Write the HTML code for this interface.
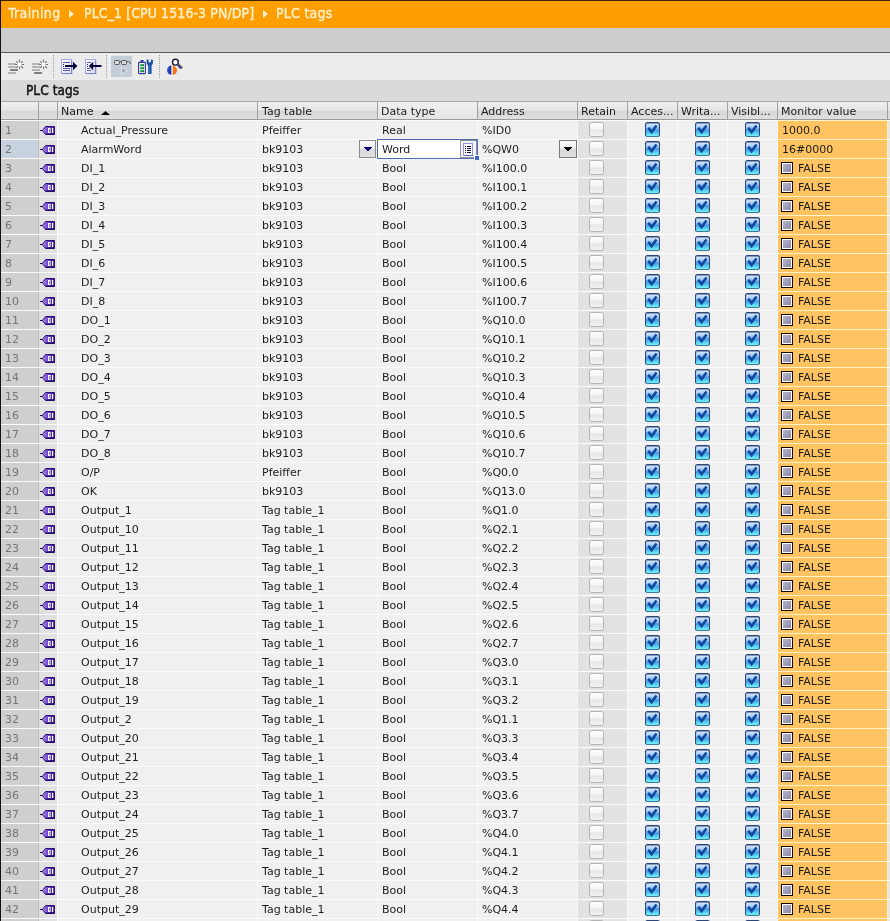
<!DOCTYPE html><html><head><meta charset="utf-8"><title>PLC tags</title><style>
*{box-sizing:border-box;margin:0;padding:0}
html,body{width:890px;height:921px;overflow:hidden;background:#f0f0f0}
#wrap{position:absolute;left:0;top:0;width:890px;height:921px;will-change:transform}
body{font-family:"DejaVu Sans","Liberation Sans",sans-serif;font-size:11px;color:#1c1c1c;position:relative}
.abs{position:absolute}
svg{position:absolute;display:block}
#title{left:0;top:0;width:890px;height:28px;background:#ff9e00;border-top:1px solid #3c2000;color:#fff1cf;font-family:"DejaVu Sans Condensed","DejaVu Sans","Liberation Sans",sans-serif;font-size:14px;line-height:24px;white-space:pre;-webkit-text-stroke:0.35px #fff1cf}
#title span{position:absolute;top:0}
#title i{position:absolute;top:9px;width:0;height:0;border-left:5px solid #fff1cf;border-top:4px solid transparent;border-bottom:4px solid transparent}
#gray{left:0;top:28px;width:890px;height:24px;background:#cdcdcd}
#dline{left:0;top:52px;width:890px;height:1px;background:#5e5e5e}
#tool{left:0;top:53px;width:890px;height:27px;background:#ececec}
#band{left:0;top:80px;width:890px;height:21px;background:#dadada;font-family:"DejaVu Sans Condensed","DejaVu Sans",sans-serif;font-size:13.5px;line-height:21px;padding-left:26px;color:#141414;-webkit-text-stroke:.45px #141414;letter-spacing:.05px}
#lborder{left:0;top:0;width:1px;height:921px;background:#121218}
#hdr{left:0;top:101px;width:890px;height:19px;border-top:1px solid #a8a8a8;border-bottom:1px solid #9a9a9a;background:linear-gradient(#eeeeee 0,#e6e6e6 48%,#d6d6d6 54%,#e0e0e0 100%)}
#hdr div{position:absolute;top:1px;height:17px;line-height:17px;white-space:nowrap}
#hdr i{position:absolute;top:0;width:1px;height:17px;background:#a0a0a0}
.r{position:absolute;left:0;width:890px;height:19px;border-top:1px solid #fbfbfb;background:#f0f0f0}
.r div{position:absolute;top:1px;height:17px;line-height:17px;white-space:nowrap}
.r .n{top:0;height:18px;left:0;width:38px;background:#cfcfcf;color:#747474;padding-left:5px;line-height:19px}
.r .ic{top:0;height:18px;left:39px;width:18px;background:#e1e1e1}
.nm{left:81px}
.tt{left:262px}
.dt{left:382px}
.ad{left:482px}
.r .rt{top:0;height:18px;left:578px;width:49px;background:#e2e2e2}
.r .mv{top:-1px;height:19px;line-height:19px;left:778px;width:110px;background:#ffc362;padding-left:4px;border-top:1px solid #fff4c8;border-right:1px solid #fff4c8}
.r .mv2{top:0;height:18px;left:888px;width:2px;background:#e6e6e6}
.r .fl{padding-left:20px}
.fi{position:absolute;left:3px;top:3px;width:12px;height:12px;border:1px solid #140800;background:#fff;padding:1px}
.fi:after{content:"";display:block;width:8px;height:8px;background:linear-gradient(135deg,#b4b4d0,#8a8aa8)}
.cb{position:absolute;top:1px;width:15px;height:15px;border-radius:2.5px}
.cb.off{left:11px;border:1px solid #b4b4b4;background:linear-gradient(#fdfdfd,#f4f4f4 45%,#e6e6e6 55%,#f2f2f2)}
.cb.on{box-shadow:inset 0 1px 0 rgba(44,70,118,.5);border:1px solid #2c4676;border-bottom-color:#3a7894;background:linear-gradient(#e4f0ff 0,#9cc4f4 35%,#4a96e4 55%,#58d0f0 80%,#78f0f8 100%)}
.vs{position:absolute;top:0;width:1px;height:18px;background:#fafafa}
.btn{position:absolute;height:18px;border:1px solid #8c8c8c;background:linear-gradient(#fcfcfc 0,#ececec 48%,#d8d8d8 52%,#e2e2e2 100%)}
</style></head><body><div id="wrap">
<div id="title" class="abs"><span style="left:8px;letter-spacing:.38px">Training</span><i style="left:69px"></i><span style="left:84px;letter-spacing:.08px">PLC_1 [CPU 1516-3 PN/DP]</span><i style="left:263px"></i><span style="left:276px;letter-spacing:.25px">PLC tags</span></div>
<div id="gray" class="abs"></div><div id="dline" class="abs"></div><div id="tool" class="abs"><svg width="200" height="27" viewBox="0 53 200 27" style="left:0;top:0"><defs><linearGradient id="dg" x1="0" y1="0" x2="1" y2="1"><stop offset="0" stop-color="#ffffff"/><stop offset="1" stop-color="#d8d8f4"/></linearGradient><linearGradient id="bl" x1="0" y1="0" x2="1" y2="0"><stop offset="0" stop-color="#3a5ce0"/><stop offset="1" stop-color="#0c2488"/></linearGradient><linearGradient id="og" x1="0" y1="0" x2="1" y2="1"><stop offset="0" stop-color="#ff8a28"/><stop offset="1" stop-color="#f05c08"/></linearGradient><linearGradient id="gr" x1="0" y1="0" x2="1" y2="0"><stop offset="0" stop-color="#38b050"/><stop offset="1" stop-color="#0c7828"/></linearGradient></defs><g shape-rendering="crispEdges"><!-- icon1 --><rect x="8" y="63" width="8" height="2" fill="#b4b4b4"/><rect x="8" y="66" width="8" height="2" fill="#b4b4b4"/><rect x="10" y="69" width="8" height="2" fill="#808080"/><rect x="8" y="72" width="8" height="2" fill="#b4b4b4"/><!-- icon2 --><rect x="32" y="63" width="8" height="2" fill="#b4b4b4"/><rect x="32" y="66" width="8" height="2" fill="#b4b4b4"/><rect x="32" y="69" width="8" height="2" fill="#b4b4b4"/><rect x="34" y="72" width="8" height="2" fill="#808080"/><!-- separators --><path d="M53.5 55V78M106.5 55V78M159.5 55V78" stroke="#9c9c9c" stroke-width="1" stroke-dasharray="1 1"/><!-- pressed bg --><rect x="111" y="56" width="21" height="21" fill="#c3ced8"/></g><!-- starbursts --><g><circle cx="19.5" cy="64.5" r="3" fill="#fff"/><path d="M19.5 59.5V62.5M19.5 66.5V69M15 64.5H17.5M21.5 64.5H24M16.3 61.3L18 63M21 66L23 68M22.8 61.3L21 63M18 66L16.2 67.8" stroke="#707070" stroke-width="1.1" fill="none"/></g><g transform="translate(24 0)"><circle cx="19.5" cy="64.5" r="3" fill="#fff"/><path d="M19.5 59.5V62.5M19.5 66.5V69M15 64.5H17.5M21.5 64.5H24M16.3 61.3L18 63M21 66L23 68M22.8 61.3L21 63M18 66L16.2 67.8" stroke="#707070" stroke-width="1.1" fill="none"/></g><!-- icon3 doc + arrow right --><rect x="62.5" y="60.5" width="10.5" height="14" fill="#9c9cc8" opacity=".35"/><rect x="61.5" y="59.5" width="10" height="14" fill="url(#dg)" stroke="#a8a8e8"/><path d="M62 73.5H72M71.5 61V74" stroke="#8484c8" fill="none"/><path d="M63 62.5H70M63 68.5H70M63 70.5H70" stroke="#606098" stroke-width="1"/><rect x="63" y="64" width="1" height="1" fill="#181850"/><rect x="63" y="66" width="1" height="1" fill="#181850"/><path d="M65 66H73.5" stroke="#06063a" stroke-width="2"/><path d="M73 61.8L77.4 66L73 70.2Z" fill="#06063a"/><!-- icon4 doc + arrow left --><rect x="86.5" y="60.5" width="10.5" height="14" fill="#9c9cc8" opacity=".35"/><rect x="85.5" y="59.5" width="10" height="14" fill="url(#dg)" stroke="#a8a8e8"/><path d="M86 73.5H96M95.5 61V74" stroke="#8484c8" fill="none"/><path d="M87 62.5H91M87 68.5H90M87 70.5H91" stroke="#606098" stroke-width="1"/><rect x="87" y="64" width="1" height="1" fill="#181850"/><rect x="87" y="66" width="1" height="1" fill="#181850"/><path d="M92.5 66H101.5" stroke="#06063a" stroke-width="2"/><path d="M93.2 61.8L88.8 66L93.2 70.2Z" fill="#06063a"/><!-- glasses --><rect x="114.5" y="60.5" width="5" height="4" rx="1" fill="#d4dadf" stroke="#5a5a5a"/><rect x="121.5" y="60.5" width="5" height="4" rx="1" fill="#d4dadf" stroke="#5a5a5a"/><path d="M119.5 61.5H121.5M126.5 61.5H128.5Q130.5 61.5 130.5 64" stroke="#5a5a5a" fill="none"/><path d="M121.5 67.2L128 70.5L121.5 73.8Z" fill="#a4b0bc" stroke="#dfe6ee" stroke-width="1"/><!-- battery --><rect x="140.5" y="60" width="3" height="2" fill="#3a3aa0"/><rect x="138.6" y="62.4" width="6.8" height="11.2" rx=".8" fill="#f4faf4" stroke="#3a3aa0" stroke-width="1.2"/><rect x="140" y="64.2" width="4" height="2" fill="url(#gr)"/><rect x="140" y="67.2" width="4" height="2" fill="url(#gr)"/><rect x="140" y="70.2" width="4" height="2" fill="url(#gr)"/><!-- wrench --><path d="M147 59.5L148.6 59.5L148.6 62.2L150.9 62.2L150.9 59.5L152.5 59.5Q154 62.5 151.6 65.6L151.6 74L148 74L148 65.6Q145.6 62.5 147 59.5Z" fill="#1c54a8"/><path d="M149 66V73.5" stroke="#4c84d8" stroke-width="1"/><!-- ball --><path d="M171.6 65.6A4.6 4.6 0 0 0 171.6 74.8Z" fill="url(#bl)"/><path d="M172.4 65.6A4.6 4.6 0 0 1 172.4 74.8Z" fill="url(#og)"/><rect x="171.5" y="65.6" width=".9" height="9.2" fill="#fff"/><!-- magnifier --><path d="M178.4 64.9L181.8 68.3" stroke="#2a2a74" stroke-width="3"/><path d="M179.2 64.1L182.6 67.5" stroke="#c4bc5c" stroke-width="0.9"/><path d="M180 66.4L180.8 67.2" stroke="#b0b0e0" stroke-width="1"/><circle cx="175.4" cy="62.2" r="2.9" fill="#fff" stroke="#16163a" stroke-width="1.4"/></svg></div>
<div id="band" class="abs">PLC tags</div>
<div id="hdr" class="abs">
<b style="position:absolute;left:378px;top:0;width:99px;height:17px;background:linear-gradient(#f0f0f0,#eaeaea 50%,#e4e4e4)"></b>
<div style="left:61px">Name</div>
<div style="left:262px">Tag table</div>
<div style="left:381px">Data type</div>
<div style="left:481px">Address</div>
<div style="left:581px">Retain</div>
<div style="left:631px">Acces...</div>
<div style="left:681px">Writa...</div>
<div style="left:731px">Visibl...</div>
<div style="left:781px">Monitor value</div>
<svg width="9" height="4" viewBox="0 0 9 4" style="left:101px;top:9px"><path d="M0 4L4.5 0L9 4Z" fill="#000"/></svg>
<i style="left:38px"></i>
<i style="left:57px"></i>
<i style="left:257px"></i>
<i style="left:377px"></i>
<i style="left:477px"></i>
<i style="left:577px"></i>
<i style="left:627px"></i>
<i style="left:677px"></i>
<i style="left:727px"></i>
<i style="left:777px"></i>
<i style="left:887px"></i>
</div>
<div class="r" style="top:120px">
<div class="n">1</div><div class="ic"><svg width="18" height="18" viewBox="0 0 18 18" style="left:0;top:0"><defs><linearGradient id="tg" x1="0" y1="0" x2="1" y2="0"><stop offset="0" stop-color="#b89cf0"/><stop offset=".35" stop-color="#7a54d0"/><stop offset="1" stop-color="#3a148c"/></linearGradient></defs><path d="M1 9.5H4.5" stroke="#100818" stroke-width="1"/><path d="M6.5 5.5H15.5V13.5H6.5L3.4 9.5Z" fill="url(#tg)" stroke="#2c1078" stroke-width="1" stroke-linejoin="round"/><path d="M6.5 13H15.5" stroke="#1c0860" stroke-width="1"/><path d="M9 7H11.6V12H9ZM10 8V11H10.7V8Z" fill="#fff" fill-rule="evenodd"/><rect x="13" y="7" width="1.2" height="5" fill="#fff"/></svg></div>
<div class="nm">Actual_Pressure</div><div class="tt">Pfeiffer</div><div class="dt">Real</div><div class="ad">%ID0</div>
<div class="rt"><span class="cb off"></span></div>
<span class="cb on" style="left:645px"><svg width="13" height="13" viewBox="0 0 13 13" style="left:0;top:0"><path d="M2.3 4.8 L5.6 9.1 L10.5 2.5" fill="none" stroke="#0e489c" stroke-width="2.5" stroke-linejoin="miter"/></svg></span>
<span class="cb on" style="left:695px"><svg width="13" height="13" viewBox="0 0 13 13" style="left:0;top:0"><path d="M2.3 4.8 L5.6 9.1 L10.5 2.5" fill="none" stroke="#0e489c" stroke-width="2.5" stroke-linejoin="miter"/></svg></span>
<span class="cb on" style="left:745px"><svg width="13" height="13" viewBox="0 0 13 13" style="left:0;top:0"><path d="M2.3 4.8 L5.6 9.1 L10.5 2.5" fill="none" stroke="#0e489c" stroke-width="2.5" stroke-linejoin="miter"/></svg></span>
<div class="mv">1000.0</div>
<div class="mv2"></div>
<span class="vs" style="left:38px;background:#bcbcbc"></span>
<span class="vs" style="left:57px"></span>
<span class="vs" style="left:257px"></span>
<span class="vs" style="left:377px"></span>
<span class="vs" style="left:477px"></span>
<span class="vs" style="left:577px"></span>
<span class="vs" style="left:627px"></span>
<span class="vs" style="left:677px"></span>
<span class="vs" style="left:727px"></span>
<span class="vs" style="left:777px"></span>
</div>
<div class="r" style="top:139px">
<div class="n" style="background:#c6d2de">2</div><div class="ic"><svg width="18" height="18" viewBox="0 0 18 18" style="left:0;top:0"><path d="M1 9.5H4.5" stroke="#100818" stroke-width="1"/><path d="M6.5 5.5H15.5V13.5H6.5L3.4 9.5Z" fill="url(#tg)" stroke="#2c1078" stroke-width="1" stroke-linejoin="round"/><path d="M6.5 13H15.5" stroke="#1c0860" stroke-width="1"/><path d="M9 7H11.6V12H9ZM10 8V11H10.7V8Z" fill="#fff" fill-rule="evenodd"/><rect x="13" y="7" width="1.2" height="5" fill="#fff"/></svg></div>
<div class="nm">AlarmWord</div><div class="tt">bk9103</div><div class="dt">Word</div><div class="ad">%QW0</div>
<div class="rt"><span class="cb off"></span></div>
<span class="cb on" style="left:645px"><svg width="13" height="13" viewBox="0 0 13 13" style="left:0;top:0"><path d="M2.3 4.8 L5.6 9.1 L10.5 2.5" fill="none" stroke="#0e489c" stroke-width="2.5" stroke-linejoin="miter"/></svg></span>
<span class="cb on" style="left:695px"><svg width="13" height="13" viewBox="0 0 13 13" style="left:0;top:0"><path d="M2.3 4.8 L5.6 9.1 L10.5 2.5" fill="none" stroke="#0e489c" stroke-width="2.5" stroke-linejoin="miter"/></svg></span>
<span class="cb on" style="left:745px"><svg width="13" height="13" viewBox="0 0 13 13" style="left:0;top:0"><path d="M2.3 4.8 L5.6 9.1 L10.5 2.5" fill="none" stroke="#0e489c" stroke-width="2.5" stroke-linejoin="miter"/></svg></span>
<div class="mv">16#0000</div>
<div class="mv2"></div>
<span class="vs" style="left:38px;background:#bcbcbc"></span>
<span class="vs" style="left:57px"></span>
<span class="vs" style="left:257px"></span>
<span class="vs" style="left:377px"></span>
<span class="vs" style="left:477px"></span>
<span class="vs" style="left:577px"></span>
<span class="vs" style="left:627px"></span>
<span class="vs" style="left:677px"></span>
<span class="vs" style="left:727px"></span>
<span class="vs" style="left:777px"></span>
</div>
<div class="r" style="top:158px">
<div class="n">3</div><div class="ic"><svg width="18" height="18" viewBox="0 0 18 18" style="left:0;top:0"><path d="M1 9.5H4.5" stroke="#100818" stroke-width="1"/><path d="M6.5 5.5H15.5V13.5H6.5L3.4 9.5Z" fill="url(#tg)" stroke="#2c1078" stroke-width="1" stroke-linejoin="round"/><path d="M6.5 13H15.5" stroke="#1c0860" stroke-width="1"/><path d="M9 7H11.6V12H9ZM10 8V11H10.7V8Z" fill="#fff" fill-rule="evenodd"/><rect x="13" y="7" width="1.2" height="5" fill="#fff"/></svg></div>
<div class="nm">DI_1</div><div class="tt">bk9103</div><div class="dt">Bool</div><div class="ad">%I100.0</div>
<div class="rt"><span class="cb off"></span></div>
<span class="cb on" style="left:645px"><svg width="13" height="13" viewBox="0 0 13 13" style="left:0;top:0"><path d="M2.3 4.8 L5.6 9.1 L10.5 2.5" fill="none" stroke="#0e489c" stroke-width="2.5" stroke-linejoin="miter"/></svg></span>
<span class="cb on" style="left:695px"><svg width="13" height="13" viewBox="0 0 13 13" style="left:0;top:0"><path d="M2.3 4.8 L5.6 9.1 L10.5 2.5" fill="none" stroke="#0e489c" stroke-width="2.5" stroke-linejoin="miter"/></svg></span>
<span class="cb on" style="left:745px"><svg width="13" height="13" viewBox="0 0 13 13" style="left:0;top:0"><path d="M2.3 4.8 L5.6 9.1 L10.5 2.5" fill="none" stroke="#0e489c" stroke-width="2.5" stroke-linejoin="miter"/></svg></span>
<div class="mv fl"><span class="fi"></span>FALSE</div>
<div class="mv2"></div>
<span class="vs" style="left:38px;background:#bcbcbc"></span>
<span class="vs" style="left:57px"></span>
<span class="vs" style="left:257px"></span>
<span class="vs" style="left:377px"></span>
<span class="vs" style="left:477px"></span>
<span class="vs" style="left:577px"></span>
<span class="vs" style="left:627px"></span>
<span class="vs" style="left:677px"></span>
<span class="vs" style="left:727px"></span>
<span class="vs" style="left:777px"></span>
</div>
<div class="r" style="top:177px">
<div class="n">4</div><div class="ic"><svg width="18" height="18" viewBox="0 0 18 18" style="left:0;top:0"><path d="M1 9.5H4.5" stroke="#100818" stroke-width="1"/><path d="M6.5 5.5H15.5V13.5H6.5L3.4 9.5Z" fill="url(#tg)" stroke="#2c1078" stroke-width="1" stroke-linejoin="round"/><path d="M6.5 13H15.5" stroke="#1c0860" stroke-width="1"/><path d="M9 7H11.6V12H9ZM10 8V11H10.7V8Z" fill="#fff" fill-rule="evenodd"/><rect x="13" y="7" width="1.2" height="5" fill="#fff"/></svg></div>
<div class="nm">DI_2</div><div class="tt">bk9103</div><div class="dt">Bool</div><div class="ad">%I100.1</div>
<div class="rt"><span class="cb off"></span></div>
<span class="cb on" style="left:645px"><svg width="13" height="13" viewBox="0 0 13 13" style="left:0;top:0"><path d="M2.3 4.8 L5.6 9.1 L10.5 2.5" fill="none" stroke="#0e489c" stroke-width="2.5" stroke-linejoin="miter"/></svg></span>
<span class="cb on" style="left:695px"><svg width="13" height="13" viewBox="0 0 13 13" style="left:0;top:0"><path d="M2.3 4.8 L5.6 9.1 L10.5 2.5" fill="none" stroke="#0e489c" stroke-width="2.5" stroke-linejoin="miter"/></svg></span>
<span class="cb on" style="left:745px"><svg width="13" height="13" viewBox="0 0 13 13" style="left:0;top:0"><path d="M2.3 4.8 L5.6 9.1 L10.5 2.5" fill="none" stroke="#0e489c" stroke-width="2.5" stroke-linejoin="miter"/></svg></span>
<div class="mv fl"><span class="fi"></span>FALSE</div>
<div class="mv2"></div>
<span class="vs" style="left:38px;background:#bcbcbc"></span>
<span class="vs" style="left:57px"></span>
<span class="vs" style="left:257px"></span>
<span class="vs" style="left:377px"></span>
<span class="vs" style="left:477px"></span>
<span class="vs" style="left:577px"></span>
<span class="vs" style="left:627px"></span>
<span class="vs" style="left:677px"></span>
<span class="vs" style="left:727px"></span>
<span class="vs" style="left:777px"></span>
</div>
<div class="r" style="top:196px">
<div class="n">5</div><div class="ic"><svg width="18" height="18" viewBox="0 0 18 18" style="left:0;top:0"><path d="M1 9.5H4.5" stroke="#100818" stroke-width="1"/><path d="M6.5 5.5H15.5V13.5H6.5L3.4 9.5Z" fill="url(#tg)" stroke="#2c1078" stroke-width="1" stroke-linejoin="round"/><path d="M6.5 13H15.5" stroke="#1c0860" stroke-width="1"/><path d="M9 7H11.6V12H9ZM10 8V11H10.7V8Z" fill="#fff" fill-rule="evenodd"/><rect x="13" y="7" width="1.2" height="5" fill="#fff"/></svg></div>
<div class="nm">DI_3</div><div class="tt">bk9103</div><div class="dt">Bool</div><div class="ad">%I100.2</div>
<div class="rt"><span class="cb off"></span></div>
<span class="cb on" style="left:645px"><svg width="13" height="13" viewBox="0 0 13 13" style="left:0;top:0"><path d="M2.3 4.8 L5.6 9.1 L10.5 2.5" fill="none" stroke="#0e489c" stroke-width="2.5" stroke-linejoin="miter"/></svg></span>
<span class="cb on" style="left:695px"><svg width="13" height="13" viewBox="0 0 13 13" style="left:0;top:0"><path d="M2.3 4.8 L5.6 9.1 L10.5 2.5" fill="none" stroke="#0e489c" stroke-width="2.5" stroke-linejoin="miter"/></svg></span>
<span class="cb on" style="left:745px"><svg width="13" height="13" viewBox="0 0 13 13" style="left:0;top:0"><path d="M2.3 4.8 L5.6 9.1 L10.5 2.5" fill="none" stroke="#0e489c" stroke-width="2.5" stroke-linejoin="miter"/></svg></span>
<div class="mv fl"><span class="fi"></span>FALSE</div>
<div class="mv2"></div>
<span class="vs" style="left:38px;background:#bcbcbc"></span>
<span class="vs" style="left:57px"></span>
<span class="vs" style="left:257px"></span>
<span class="vs" style="left:377px"></span>
<span class="vs" style="left:477px"></span>
<span class="vs" style="left:577px"></span>
<span class="vs" style="left:627px"></span>
<span class="vs" style="left:677px"></span>
<span class="vs" style="left:727px"></span>
<span class="vs" style="left:777px"></span>
</div>
<div class="r" style="top:215px">
<div class="n">6</div><div class="ic"><svg width="18" height="18" viewBox="0 0 18 18" style="left:0;top:0"><path d="M1 9.5H4.5" stroke="#100818" stroke-width="1"/><path d="M6.5 5.5H15.5V13.5H6.5L3.4 9.5Z" fill="url(#tg)" stroke="#2c1078" stroke-width="1" stroke-linejoin="round"/><path d="M6.5 13H15.5" stroke="#1c0860" stroke-width="1"/><path d="M9 7H11.6V12H9ZM10 8V11H10.7V8Z" fill="#fff" fill-rule="evenodd"/><rect x="13" y="7" width="1.2" height="5" fill="#fff"/></svg></div>
<div class="nm">DI_4</div><div class="tt">bk9103</div><div class="dt">Bool</div><div class="ad">%I100.3</div>
<div class="rt"><span class="cb off"></span></div>
<span class="cb on" style="left:645px"><svg width="13" height="13" viewBox="0 0 13 13" style="left:0;top:0"><path d="M2.3 4.8 L5.6 9.1 L10.5 2.5" fill="none" stroke="#0e489c" stroke-width="2.5" stroke-linejoin="miter"/></svg></span>
<span class="cb on" style="left:695px"><svg width="13" height="13" viewBox="0 0 13 13" style="left:0;top:0"><path d="M2.3 4.8 L5.6 9.1 L10.5 2.5" fill="none" stroke="#0e489c" stroke-width="2.5" stroke-linejoin="miter"/></svg></span>
<span class="cb on" style="left:745px"><svg width="13" height="13" viewBox="0 0 13 13" style="left:0;top:0"><path d="M2.3 4.8 L5.6 9.1 L10.5 2.5" fill="none" stroke="#0e489c" stroke-width="2.5" stroke-linejoin="miter"/></svg></span>
<div class="mv fl"><span class="fi"></span>FALSE</div>
<div class="mv2"></div>
<span class="vs" style="left:38px;background:#bcbcbc"></span>
<span class="vs" style="left:57px"></span>
<span class="vs" style="left:257px"></span>
<span class="vs" style="left:377px"></span>
<span class="vs" style="left:477px"></span>
<span class="vs" style="left:577px"></span>
<span class="vs" style="left:627px"></span>
<span class="vs" style="left:677px"></span>
<span class="vs" style="left:727px"></span>
<span class="vs" style="left:777px"></span>
</div>
<div class="r" style="top:234px">
<div class="n">7</div><div class="ic"><svg width="18" height="18" viewBox="0 0 18 18" style="left:0;top:0"><path d="M1 9.5H4.5" stroke="#100818" stroke-width="1"/><path d="M6.5 5.5H15.5V13.5H6.5L3.4 9.5Z" fill="url(#tg)" stroke="#2c1078" stroke-width="1" stroke-linejoin="round"/><path d="M6.5 13H15.5" stroke="#1c0860" stroke-width="1"/><path d="M9 7H11.6V12H9ZM10 8V11H10.7V8Z" fill="#fff" fill-rule="evenodd"/><rect x="13" y="7" width="1.2" height="5" fill="#fff"/></svg></div>
<div class="nm">DI_5</div><div class="tt">bk9103</div><div class="dt">Bool</div><div class="ad">%I100.4</div>
<div class="rt"><span class="cb off"></span></div>
<span class="cb on" style="left:645px"><svg width="13" height="13" viewBox="0 0 13 13" style="left:0;top:0"><path d="M2.3 4.8 L5.6 9.1 L10.5 2.5" fill="none" stroke="#0e489c" stroke-width="2.5" stroke-linejoin="miter"/></svg></span>
<span class="cb on" style="left:695px"><svg width="13" height="13" viewBox="0 0 13 13" style="left:0;top:0"><path d="M2.3 4.8 L5.6 9.1 L10.5 2.5" fill="none" stroke="#0e489c" stroke-width="2.5" stroke-linejoin="miter"/></svg></span>
<span class="cb on" style="left:745px"><svg width="13" height="13" viewBox="0 0 13 13" style="left:0;top:0"><path d="M2.3 4.8 L5.6 9.1 L10.5 2.5" fill="none" stroke="#0e489c" stroke-width="2.5" stroke-linejoin="miter"/></svg></span>
<div class="mv fl"><span class="fi"></span>FALSE</div>
<div class="mv2"></div>
<span class="vs" style="left:38px;background:#bcbcbc"></span>
<span class="vs" style="left:57px"></span>
<span class="vs" style="left:257px"></span>
<span class="vs" style="left:377px"></span>
<span class="vs" style="left:477px"></span>
<span class="vs" style="left:577px"></span>
<span class="vs" style="left:627px"></span>
<span class="vs" style="left:677px"></span>
<span class="vs" style="left:727px"></span>
<span class="vs" style="left:777px"></span>
</div>
<div class="r" style="top:253px">
<div class="n">8</div><div class="ic"><svg width="18" height="18" viewBox="0 0 18 18" style="left:0;top:0"><path d="M1 9.5H4.5" stroke="#100818" stroke-width="1"/><path d="M6.5 5.5H15.5V13.5H6.5L3.4 9.5Z" fill="url(#tg)" stroke="#2c1078" stroke-width="1" stroke-linejoin="round"/><path d="M6.5 13H15.5" stroke="#1c0860" stroke-width="1"/><path d="M9 7H11.6V12H9ZM10 8V11H10.7V8Z" fill="#fff" fill-rule="evenodd"/><rect x="13" y="7" width="1.2" height="5" fill="#fff"/></svg></div>
<div class="nm">DI_6</div><div class="tt">bk9103</div><div class="dt">Bool</div><div class="ad">%I100.5</div>
<div class="rt"><span class="cb off"></span></div>
<span class="cb on" style="left:645px"><svg width="13" height="13" viewBox="0 0 13 13" style="left:0;top:0"><path d="M2.3 4.8 L5.6 9.1 L10.5 2.5" fill="none" stroke="#0e489c" stroke-width="2.5" stroke-linejoin="miter"/></svg></span>
<span class="cb on" style="left:695px"><svg width="13" height="13" viewBox="0 0 13 13" style="left:0;top:0"><path d="M2.3 4.8 L5.6 9.1 L10.5 2.5" fill="none" stroke="#0e489c" stroke-width="2.5" stroke-linejoin="miter"/></svg></span>
<span class="cb on" style="left:745px"><svg width="13" height="13" viewBox="0 0 13 13" style="left:0;top:0"><path d="M2.3 4.8 L5.6 9.1 L10.5 2.5" fill="none" stroke="#0e489c" stroke-width="2.5" stroke-linejoin="miter"/></svg></span>
<div class="mv fl"><span class="fi"></span>FALSE</div>
<div class="mv2"></div>
<span class="vs" style="left:38px;background:#bcbcbc"></span>
<span class="vs" style="left:57px"></span>
<span class="vs" style="left:257px"></span>
<span class="vs" style="left:377px"></span>
<span class="vs" style="left:477px"></span>
<span class="vs" style="left:577px"></span>
<span class="vs" style="left:627px"></span>
<span class="vs" style="left:677px"></span>
<span class="vs" style="left:727px"></span>
<span class="vs" style="left:777px"></span>
</div>
<div class="r" style="top:272px">
<div class="n">9</div><div class="ic"><svg width="18" height="18" viewBox="0 0 18 18" style="left:0;top:0"><path d="M1 9.5H4.5" stroke="#100818" stroke-width="1"/><path d="M6.5 5.5H15.5V13.5H6.5L3.4 9.5Z" fill="url(#tg)" stroke="#2c1078" stroke-width="1" stroke-linejoin="round"/><path d="M6.5 13H15.5" stroke="#1c0860" stroke-width="1"/><path d="M9 7H11.6V12H9ZM10 8V11H10.7V8Z" fill="#fff" fill-rule="evenodd"/><rect x="13" y="7" width="1.2" height="5" fill="#fff"/></svg></div>
<div class="nm">DI_7</div><div class="tt">bk9103</div><div class="dt">Bool</div><div class="ad">%I100.6</div>
<div class="rt"><span class="cb off"></span></div>
<span class="cb on" style="left:645px"><svg width="13" height="13" viewBox="0 0 13 13" style="left:0;top:0"><path d="M2.3 4.8 L5.6 9.1 L10.5 2.5" fill="none" stroke="#0e489c" stroke-width="2.5" stroke-linejoin="miter"/></svg></span>
<span class="cb on" style="left:695px"><svg width="13" height="13" viewBox="0 0 13 13" style="left:0;top:0"><path d="M2.3 4.8 L5.6 9.1 L10.5 2.5" fill="none" stroke="#0e489c" stroke-width="2.5" stroke-linejoin="miter"/></svg></span>
<span class="cb on" style="left:745px"><svg width="13" height="13" viewBox="0 0 13 13" style="left:0;top:0"><path d="M2.3 4.8 L5.6 9.1 L10.5 2.5" fill="none" stroke="#0e489c" stroke-width="2.5" stroke-linejoin="miter"/></svg></span>
<div class="mv fl"><span class="fi"></span>FALSE</div>
<div class="mv2"></div>
<span class="vs" style="left:38px;background:#bcbcbc"></span>
<span class="vs" style="left:57px"></span>
<span class="vs" style="left:257px"></span>
<span class="vs" style="left:377px"></span>
<span class="vs" style="left:477px"></span>
<span class="vs" style="left:577px"></span>
<span class="vs" style="left:627px"></span>
<span class="vs" style="left:677px"></span>
<span class="vs" style="left:727px"></span>
<span class="vs" style="left:777px"></span>
</div>
<div class="r" style="top:291px">
<div class="n">10</div><div class="ic"><svg width="18" height="18" viewBox="0 0 18 18" style="left:0;top:0"><path d="M1 9.5H4.5" stroke="#100818" stroke-width="1"/><path d="M6.5 5.5H15.5V13.5H6.5L3.4 9.5Z" fill="url(#tg)" stroke="#2c1078" stroke-width="1" stroke-linejoin="round"/><path d="M6.5 13H15.5" stroke="#1c0860" stroke-width="1"/><path d="M9 7H11.6V12H9ZM10 8V11H10.7V8Z" fill="#fff" fill-rule="evenodd"/><rect x="13" y="7" width="1.2" height="5" fill="#fff"/></svg></div>
<div class="nm">DI_8</div><div class="tt">bk9103</div><div class="dt">Bool</div><div class="ad">%I100.7</div>
<div class="rt"><span class="cb off"></span></div>
<span class="cb on" style="left:645px"><svg width="13" height="13" viewBox="0 0 13 13" style="left:0;top:0"><path d="M2.3 4.8 L5.6 9.1 L10.5 2.5" fill="none" stroke="#0e489c" stroke-width="2.5" stroke-linejoin="miter"/></svg></span>
<span class="cb on" style="left:695px"><svg width="13" height="13" viewBox="0 0 13 13" style="left:0;top:0"><path d="M2.3 4.8 L5.6 9.1 L10.5 2.5" fill="none" stroke="#0e489c" stroke-width="2.5" stroke-linejoin="miter"/></svg></span>
<span class="cb on" style="left:745px"><svg width="13" height="13" viewBox="0 0 13 13" style="left:0;top:0"><path d="M2.3 4.8 L5.6 9.1 L10.5 2.5" fill="none" stroke="#0e489c" stroke-width="2.5" stroke-linejoin="miter"/></svg></span>
<div class="mv fl"><span class="fi"></span>FALSE</div>
<div class="mv2"></div>
<span class="vs" style="left:38px;background:#bcbcbc"></span>
<span class="vs" style="left:57px"></span>
<span class="vs" style="left:257px"></span>
<span class="vs" style="left:377px"></span>
<span class="vs" style="left:477px"></span>
<span class="vs" style="left:577px"></span>
<span class="vs" style="left:627px"></span>
<span class="vs" style="left:677px"></span>
<span class="vs" style="left:727px"></span>
<span class="vs" style="left:777px"></span>
</div>
<div class="r" style="top:310px">
<div class="n">11</div><div class="ic"><svg width="18" height="18" viewBox="0 0 18 18" style="left:0;top:0"><path d="M1 9.5H4.5" stroke="#100818" stroke-width="1"/><path d="M6.5 5.5H15.5V13.5H6.5L3.4 9.5Z" fill="url(#tg)" stroke="#2c1078" stroke-width="1" stroke-linejoin="round"/><path d="M6.5 13H15.5" stroke="#1c0860" stroke-width="1"/><path d="M9 7H11.6V12H9ZM10 8V11H10.7V8Z" fill="#fff" fill-rule="evenodd"/><rect x="13" y="7" width="1.2" height="5" fill="#fff"/></svg></div>
<div class="nm">DO_1</div><div class="tt">bk9103</div><div class="dt">Bool</div><div class="ad">%Q10.0</div>
<div class="rt"><span class="cb off"></span></div>
<span class="cb on" style="left:645px"><svg width="13" height="13" viewBox="0 0 13 13" style="left:0;top:0"><path d="M2.3 4.8 L5.6 9.1 L10.5 2.5" fill="none" stroke="#0e489c" stroke-width="2.5" stroke-linejoin="miter"/></svg></span>
<span class="cb on" style="left:695px"><svg width="13" height="13" viewBox="0 0 13 13" style="left:0;top:0"><path d="M2.3 4.8 L5.6 9.1 L10.5 2.5" fill="none" stroke="#0e489c" stroke-width="2.5" stroke-linejoin="miter"/></svg></span>
<span class="cb on" style="left:745px"><svg width="13" height="13" viewBox="0 0 13 13" style="left:0;top:0"><path d="M2.3 4.8 L5.6 9.1 L10.5 2.5" fill="none" stroke="#0e489c" stroke-width="2.5" stroke-linejoin="miter"/></svg></span>
<div class="mv fl"><span class="fi"></span>FALSE</div>
<div class="mv2"></div>
<span class="vs" style="left:38px;background:#bcbcbc"></span>
<span class="vs" style="left:57px"></span>
<span class="vs" style="left:257px"></span>
<span class="vs" style="left:377px"></span>
<span class="vs" style="left:477px"></span>
<span class="vs" style="left:577px"></span>
<span class="vs" style="left:627px"></span>
<span class="vs" style="left:677px"></span>
<span class="vs" style="left:727px"></span>
<span class="vs" style="left:777px"></span>
</div>
<div class="r" style="top:329px">
<div class="n">12</div><div class="ic"><svg width="18" height="18" viewBox="0 0 18 18" style="left:0;top:0"><path d="M1 9.5H4.5" stroke="#100818" stroke-width="1"/><path d="M6.5 5.5H15.5V13.5H6.5L3.4 9.5Z" fill="url(#tg)" stroke="#2c1078" stroke-width="1" stroke-linejoin="round"/><path d="M6.5 13H15.5" stroke="#1c0860" stroke-width="1"/><path d="M9 7H11.6V12H9ZM10 8V11H10.7V8Z" fill="#fff" fill-rule="evenodd"/><rect x="13" y="7" width="1.2" height="5" fill="#fff"/></svg></div>
<div class="nm">DO_2</div><div class="tt">bk9103</div><div class="dt">Bool</div><div class="ad">%Q10.1</div>
<div class="rt"><span class="cb off"></span></div>
<span class="cb on" style="left:645px"><svg width="13" height="13" viewBox="0 0 13 13" style="left:0;top:0"><path d="M2.3 4.8 L5.6 9.1 L10.5 2.5" fill="none" stroke="#0e489c" stroke-width="2.5" stroke-linejoin="miter"/></svg></span>
<span class="cb on" style="left:695px"><svg width="13" height="13" viewBox="0 0 13 13" style="left:0;top:0"><path d="M2.3 4.8 L5.6 9.1 L10.5 2.5" fill="none" stroke="#0e489c" stroke-width="2.5" stroke-linejoin="miter"/></svg></span>
<span class="cb on" style="left:745px"><svg width="13" height="13" viewBox="0 0 13 13" style="left:0;top:0"><path d="M2.3 4.8 L5.6 9.1 L10.5 2.5" fill="none" stroke="#0e489c" stroke-width="2.5" stroke-linejoin="miter"/></svg></span>
<div class="mv fl"><span class="fi"></span>FALSE</div>
<div class="mv2"></div>
<span class="vs" style="left:38px;background:#bcbcbc"></span>
<span class="vs" style="left:57px"></span>
<span class="vs" style="left:257px"></span>
<span class="vs" style="left:377px"></span>
<span class="vs" style="left:477px"></span>
<span class="vs" style="left:577px"></span>
<span class="vs" style="left:627px"></span>
<span class="vs" style="left:677px"></span>
<span class="vs" style="left:727px"></span>
<span class="vs" style="left:777px"></span>
</div>
<div class="r" style="top:348px">
<div class="n">13</div><div class="ic"><svg width="18" height="18" viewBox="0 0 18 18" style="left:0;top:0"><path d="M1 9.5H4.5" stroke="#100818" stroke-width="1"/><path d="M6.5 5.5H15.5V13.5H6.5L3.4 9.5Z" fill="url(#tg)" stroke="#2c1078" stroke-width="1" stroke-linejoin="round"/><path d="M6.5 13H15.5" stroke="#1c0860" stroke-width="1"/><path d="M9 7H11.6V12H9ZM10 8V11H10.7V8Z" fill="#fff" fill-rule="evenodd"/><rect x="13" y="7" width="1.2" height="5" fill="#fff"/></svg></div>
<div class="nm">DO_3</div><div class="tt">bk9103</div><div class="dt">Bool</div><div class="ad">%Q10.2</div>
<div class="rt"><span class="cb off"></span></div>
<span class="cb on" style="left:645px"><svg width="13" height="13" viewBox="0 0 13 13" style="left:0;top:0"><path d="M2.3 4.8 L5.6 9.1 L10.5 2.5" fill="none" stroke="#0e489c" stroke-width="2.5" stroke-linejoin="miter"/></svg></span>
<span class="cb on" style="left:695px"><svg width="13" height="13" viewBox="0 0 13 13" style="left:0;top:0"><path d="M2.3 4.8 L5.6 9.1 L10.5 2.5" fill="none" stroke="#0e489c" stroke-width="2.5" stroke-linejoin="miter"/></svg></span>
<span class="cb on" style="left:745px"><svg width="13" height="13" viewBox="0 0 13 13" style="left:0;top:0"><path d="M2.3 4.8 L5.6 9.1 L10.5 2.5" fill="none" stroke="#0e489c" stroke-width="2.5" stroke-linejoin="miter"/></svg></span>
<div class="mv fl"><span class="fi"></span>FALSE</div>
<div class="mv2"></div>
<span class="vs" style="left:38px;background:#bcbcbc"></span>
<span class="vs" style="left:57px"></span>
<span class="vs" style="left:257px"></span>
<span class="vs" style="left:377px"></span>
<span class="vs" style="left:477px"></span>
<span class="vs" style="left:577px"></span>
<span class="vs" style="left:627px"></span>
<span class="vs" style="left:677px"></span>
<span class="vs" style="left:727px"></span>
<span class="vs" style="left:777px"></span>
</div>
<div class="r" style="top:367px">
<div class="n">14</div><div class="ic"><svg width="18" height="18" viewBox="0 0 18 18" style="left:0;top:0"><path d="M1 9.5H4.5" stroke="#100818" stroke-width="1"/><path d="M6.5 5.5H15.5V13.5H6.5L3.4 9.5Z" fill="url(#tg)" stroke="#2c1078" stroke-width="1" stroke-linejoin="round"/><path d="M6.5 13H15.5" stroke="#1c0860" stroke-width="1"/><path d="M9 7H11.6V12H9ZM10 8V11H10.7V8Z" fill="#fff" fill-rule="evenodd"/><rect x="13" y="7" width="1.2" height="5" fill="#fff"/></svg></div>
<div class="nm">DO_4</div><div class="tt">bk9103</div><div class="dt">Bool</div><div class="ad">%Q10.3</div>
<div class="rt"><span class="cb off"></span></div>
<span class="cb on" style="left:645px"><svg width="13" height="13" viewBox="0 0 13 13" style="left:0;top:0"><path d="M2.3 4.8 L5.6 9.1 L10.5 2.5" fill="none" stroke="#0e489c" stroke-width="2.5" stroke-linejoin="miter"/></svg></span>
<span class="cb on" style="left:695px"><svg width="13" height="13" viewBox="0 0 13 13" style="left:0;top:0"><path d="M2.3 4.8 L5.6 9.1 L10.5 2.5" fill="none" stroke="#0e489c" stroke-width="2.5" stroke-linejoin="miter"/></svg></span>
<span class="cb on" style="left:745px"><svg width="13" height="13" viewBox="0 0 13 13" style="left:0;top:0"><path d="M2.3 4.8 L5.6 9.1 L10.5 2.5" fill="none" stroke="#0e489c" stroke-width="2.5" stroke-linejoin="miter"/></svg></span>
<div class="mv fl"><span class="fi"></span>FALSE</div>
<div class="mv2"></div>
<span class="vs" style="left:38px;background:#bcbcbc"></span>
<span class="vs" style="left:57px"></span>
<span class="vs" style="left:257px"></span>
<span class="vs" style="left:377px"></span>
<span class="vs" style="left:477px"></span>
<span class="vs" style="left:577px"></span>
<span class="vs" style="left:627px"></span>
<span class="vs" style="left:677px"></span>
<span class="vs" style="left:727px"></span>
<span class="vs" style="left:777px"></span>
</div>
<div class="r" style="top:386px">
<div class="n">15</div><div class="ic"><svg width="18" height="18" viewBox="0 0 18 18" style="left:0;top:0"><path d="M1 9.5H4.5" stroke="#100818" stroke-width="1"/><path d="M6.5 5.5H15.5V13.5H6.5L3.4 9.5Z" fill="url(#tg)" stroke="#2c1078" stroke-width="1" stroke-linejoin="round"/><path d="M6.5 13H15.5" stroke="#1c0860" stroke-width="1"/><path d="M9 7H11.6V12H9ZM10 8V11H10.7V8Z" fill="#fff" fill-rule="evenodd"/><rect x="13" y="7" width="1.2" height="5" fill="#fff"/></svg></div>
<div class="nm">DO_5</div><div class="tt">bk9103</div><div class="dt">Bool</div><div class="ad">%Q10.4</div>
<div class="rt"><span class="cb off"></span></div>
<span class="cb on" style="left:645px"><svg width="13" height="13" viewBox="0 0 13 13" style="left:0;top:0"><path d="M2.3 4.8 L5.6 9.1 L10.5 2.5" fill="none" stroke="#0e489c" stroke-width="2.5" stroke-linejoin="miter"/></svg></span>
<span class="cb on" style="left:695px"><svg width="13" height="13" viewBox="0 0 13 13" style="left:0;top:0"><path d="M2.3 4.8 L5.6 9.1 L10.5 2.5" fill="none" stroke="#0e489c" stroke-width="2.5" stroke-linejoin="miter"/></svg></span>
<span class="cb on" style="left:745px"><svg width="13" height="13" viewBox="0 0 13 13" style="left:0;top:0"><path d="M2.3 4.8 L5.6 9.1 L10.5 2.5" fill="none" stroke="#0e489c" stroke-width="2.5" stroke-linejoin="miter"/></svg></span>
<div class="mv fl"><span class="fi"></span>FALSE</div>
<div class="mv2"></div>
<span class="vs" style="left:38px;background:#bcbcbc"></span>
<span class="vs" style="left:57px"></span>
<span class="vs" style="left:257px"></span>
<span class="vs" style="left:377px"></span>
<span class="vs" style="left:477px"></span>
<span class="vs" style="left:577px"></span>
<span class="vs" style="left:627px"></span>
<span class="vs" style="left:677px"></span>
<span class="vs" style="left:727px"></span>
<span class="vs" style="left:777px"></span>
</div>
<div class="r" style="top:405px">
<div class="n">16</div><div class="ic"><svg width="18" height="18" viewBox="0 0 18 18" style="left:0;top:0"><path d="M1 9.5H4.5" stroke="#100818" stroke-width="1"/><path d="M6.5 5.5H15.5V13.5H6.5L3.4 9.5Z" fill="url(#tg)" stroke="#2c1078" stroke-width="1" stroke-linejoin="round"/><path d="M6.5 13H15.5" stroke="#1c0860" stroke-width="1"/><path d="M9 7H11.6V12H9ZM10 8V11H10.7V8Z" fill="#fff" fill-rule="evenodd"/><rect x="13" y="7" width="1.2" height="5" fill="#fff"/></svg></div>
<div class="nm">DO_6</div><div class="tt">bk9103</div><div class="dt">Bool</div><div class="ad">%Q10.5</div>
<div class="rt"><span class="cb off"></span></div>
<span class="cb on" style="left:645px"><svg width="13" height="13" viewBox="0 0 13 13" style="left:0;top:0"><path d="M2.3 4.8 L5.6 9.1 L10.5 2.5" fill="none" stroke="#0e489c" stroke-width="2.5" stroke-linejoin="miter"/></svg></span>
<span class="cb on" style="left:695px"><svg width="13" height="13" viewBox="0 0 13 13" style="left:0;top:0"><path d="M2.3 4.8 L5.6 9.1 L10.5 2.5" fill="none" stroke="#0e489c" stroke-width="2.5" stroke-linejoin="miter"/></svg></span>
<span class="cb on" style="left:745px"><svg width="13" height="13" viewBox="0 0 13 13" style="left:0;top:0"><path d="M2.3 4.8 L5.6 9.1 L10.5 2.5" fill="none" stroke="#0e489c" stroke-width="2.5" stroke-linejoin="miter"/></svg></span>
<div class="mv fl"><span class="fi"></span>FALSE</div>
<div class="mv2"></div>
<span class="vs" style="left:38px;background:#bcbcbc"></span>
<span class="vs" style="left:57px"></span>
<span class="vs" style="left:257px"></span>
<span class="vs" style="left:377px"></span>
<span class="vs" style="left:477px"></span>
<span class="vs" style="left:577px"></span>
<span class="vs" style="left:627px"></span>
<span class="vs" style="left:677px"></span>
<span class="vs" style="left:727px"></span>
<span class="vs" style="left:777px"></span>
</div>
<div class="r" style="top:424px">
<div class="n">17</div><div class="ic"><svg width="18" height="18" viewBox="0 0 18 18" style="left:0;top:0"><path d="M1 9.5H4.5" stroke="#100818" stroke-width="1"/><path d="M6.5 5.5H15.5V13.5H6.5L3.4 9.5Z" fill="url(#tg)" stroke="#2c1078" stroke-width="1" stroke-linejoin="round"/><path d="M6.5 13H15.5" stroke="#1c0860" stroke-width="1"/><path d="M9 7H11.6V12H9ZM10 8V11H10.7V8Z" fill="#fff" fill-rule="evenodd"/><rect x="13" y="7" width="1.2" height="5" fill="#fff"/></svg></div>
<div class="nm">DO_7</div><div class="tt">bk9103</div><div class="dt">Bool</div><div class="ad">%Q10.6</div>
<div class="rt"><span class="cb off"></span></div>
<span class="cb on" style="left:645px"><svg width="13" height="13" viewBox="0 0 13 13" style="left:0;top:0"><path d="M2.3 4.8 L5.6 9.1 L10.5 2.5" fill="none" stroke="#0e489c" stroke-width="2.5" stroke-linejoin="miter"/></svg></span>
<span class="cb on" style="left:695px"><svg width="13" height="13" viewBox="0 0 13 13" style="left:0;top:0"><path d="M2.3 4.8 L5.6 9.1 L10.5 2.5" fill="none" stroke="#0e489c" stroke-width="2.5" stroke-linejoin="miter"/></svg></span>
<span class="cb on" style="left:745px"><svg width="13" height="13" viewBox="0 0 13 13" style="left:0;top:0"><path d="M2.3 4.8 L5.6 9.1 L10.5 2.5" fill="none" stroke="#0e489c" stroke-width="2.5" stroke-linejoin="miter"/></svg></span>
<div class="mv fl"><span class="fi"></span>FALSE</div>
<div class="mv2"></div>
<span class="vs" style="left:38px;background:#bcbcbc"></span>
<span class="vs" style="left:57px"></span>
<span class="vs" style="left:257px"></span>
<span class="vs" style="left:377px"></span>
<span class="vs" style="left:477px"></span>
<span class="vs" style="left:577px"></span>
<span class="vs" style="left:627px"></span>
<span class="vs" style="left:677px"></span>
<span class="vs" style="left:727px"></span>
<span class="vs" style="left:777px"></span>
</div>
<div class="r" style="top:443px">
<div class="n">18</div><div class="ic"><svg width="18" height="18" viewBox="0 0 18 18" style="left:0;top:0"><path d="M1 9.5H4.5" stroke="#100818" stroke-width="1"/><path d="M6.5 5.5H15.5V13.5H6.5L3.4 9.5Z" fill="url(#tg)" stroke="#2c1078" stroke-width="1" stroke-linejoin="round"/><path d="M6.5 13H15.5" stroke="#1c0860" stroke-width="1"/><path d="M9 7H11.6V12H9ZM10 8V11H10.7V8Z" fill="#fff" fill-rule="evenodd"/><rect x="13" y="7" width="1.2" height="5" fill="#fff"/></svg></div>
<div class="nm">DO_8</div><div class="tt">bk9103</div><div class="dt">Bool</div><div class="ad">%Q10.7</div>
<div class="rt"><span class="cb off"></span></div>
<span class="cb on" style="left:645px"><svg width="13" height="13" viewBox="0 0 13 13" style="left:0;top:0"><path d="M2.3 4.8 L5.6 9.1 L10.5 2.5" fill="none" stroke="#0e489c" stroke-width="2.5" stroke-linejoin="miter"/></svg></span>
<span class="cb on" style="left:695px"><svg width="13" height="13" viewBox="0 0 13 13" style="left:0;top:0"><path d="M2.3 4.8 L5.6 9.1 L10.5 2.5" fill="none" stroke="#0e489c" stroke-width="2.5" stroke-linejoin="miter"/></svg></span>
<span class="cb on" style="left:745px"><svg width="13" height="13" viewBox="0 0 13 13" style="left:0;top:0"><path d="M2.3 4.8 L5.6 9.1 L10.5 2.5" fill="none" stroke="#0e489c" stroke-width="2.5" stroke-linejoin="miter"/></svg></span>
<div class="mv fl"><span class="fi"></span>FALSE</div>
<div class="mv2"></div>
<span class="vs" style="left:38px;background:#bcbcbc"></span>
<span class="vs" style="left:57px"></span>
<span class="vs" style="left:257px"></span>
<span class="vs" style="left:377px"></span>
<span class="vs" style="left:477px"></span>
<span class="vs" style="left:577px"></span>
<span class="vs" style="left:627px"></span>
<span class="vs" style="left:677px"></span>
<span class="vs" style="left:727px"></span>
<span class="vs" style="left:777px"></span>
</div>
<div class="r" style="top:462px">
<div class="n">19</div><div class="ic"><svg width="18" height="18" viewBox="0 0 18 18" style="left:0;top:0"><path d="M1 9.5H4.5" stroke="#100818" stroke-width="1"/><path d="M6.5 5.5H15.5V13.5H6.5L3.4 9.5Z" fill="url(#tg)" stroke="#2c1078" stroke-width="1" stroke-linejoin="round"/><path d="M6.5 13H15.5" stroke="#1c0860" stroke-width="1"/><path d="M9 7H11.6V12H9ZM10 8V11H10.7V8Z" fill="#fff" fill-rule="evenodd"/><rect x="13" y="7" width="1.2" height="5" fill="#fff"/></svg></div>
<div class="nm">O/P</div><div class="tt">Pfeiffer</div><div class="dt">Bool</div><div class="ad">%Q0.0</div>
<div class="rt"><span class="cb off"></span></div>
<span class="cb on" style="left:645px"><svg width="13" height="13" viewBox="0 0 13 13" style="left:0;top:0"><path d="M2.3 4.8 L5.6 9.1 L10.5 2.5" fill="none" stroke="#0e489c" stroke-width="2.5" stroke-linejoin="miter"/></svg></span>
<span class="cb on" style="left:695px"><svg width="13" height="13" viewBox="0 0 13 13" style="left:0;top:0"><path d="M2.3 4.8 L5.6 9.1 L10.5 2.5" fill="none" stroke="#0e489c" stroke-width="2.5" stroke-linejoin="miter"/></svg></span>
<span class="cb on" style="left:745px"><svg width="13" height="13" viewBox="0 0 13 13" style="left:0;top:0"><path d="M2.3 4.8 L5.6 9.1 L10.5 2.5" fill="none" stroke="#0e489c" stroke-width="2.5" stroke-linejoin="miter"/></svg></span>
<div class="mv fl"><span class="fi"></span>FALSE</div>
<div class="mv2"></div>
<span class="vs" style="left:38px;background:#bcbcbc"></span>
<span class="vs" style="left:57px"></span>
<span class="vs" style="left:257px"></span>
<span class="vs" style="left:377px"></span>
<span class="vs" style="left:477px"></span>
<span class="vs" style="left:577px"></span>
<span class="vs" style="left:627px"></span>
<span class="vs" style="left:677px"></span>
<span class="vs" style="left:727px"></span>
<span class="vs" style="left:777px"></span>
</div>
<div class="r" style="top:481px">
<div class="n">20</div><div class="ic"><svg width="18" height="18" viewBox="0 0 18 18" style="left:0;top:0"><path d="M1 9.5H4.5" stroke="#100818" stroke-width="1"/><path d="M6.5 5.5H15.5V13.5H6.5L3.4 9.5Z" fill="url(#tg)" stroke="#2c1078" stroke-width="1" stroke-linejoin="round"/><path d="M6.5 13H15.5" stroke="#1c0860" stroke-width="1"/><path d="M9 7H11.6V12H9ZM10 8V11H10.7V8Z" fill="#fff" fill-rule="evenodd"/><rect x="13" y="7" width="1.2" height="5" fill="#fff"/></svg></div>
<div class="nm">OK</div><div class="tt">bk9103</div><div class="dt">Bool</div><div class="ad">%Q13.0</div>
<div class="rt"><span class="cb off"></span></div>
<span class="cb on" style="left:645px"><svg width="13" height="13" viewBox="0 0 13 13" style="left:0;top:0"><path d="M2.3 4.8 L5.6 9.1 L10.5 2.5" fill="none" stroke="#0e489c" stroke-width="2.5" stroke-linejoin="miter"/></svg></span>
<span class="cb on" style="left:695px"><svg width="13" height="13" viewBox="0 0 13 13" style="left:0;top:0"><path d="M2.3 4.8 L5.6 9.1 L10.5 2.5" fill="none" stroke="#0e489c" stroke-width="2.5" stroke-linejoin="miter"/></svg></span>
<span class="cb on" style="left:745px"><svg width="13" height="13" viewBox="0 0 13 13" style="left:0;top:0"><path d="M2.3 4.8 L5.6 9.1 L10.5 2.5" fill="none" stroke="#0e489c" stroke-width="2.5" stroke-linejoin="miter"/></svg></span>
<div class="mv fl"><span class="fi"></span>FALSE</div>
<div class="mv2"></div>
<span class="vs" style="left:38px;background:#bcbcbc"></span>
<span class="vs" style="left:57px"></span>
<span class="vs" style="left:257px"></span>
<span class="vs" style="left:377px"></span>
<span class="vs" style="left:477px"></span>
<span class="vs" style="left:577px"></span>
<span class="vs" style="left:627px"></span>
<span class="vs" style="left:677px"></span>
<span class="vs" style="left:727px"></span>
<span class="vs" style="left:777px"></span>
</div>
<div class="r" style="top:500px">
<div class="n">21</div><div class="ic"><svg width="18" height="18" viewBox="0 0 18 18" style="left:0;top:0"><path d="M1 9.5H4.5" stroke="#100818" stroke-width="1"/><path d="M6.5 5.5H15.5V13.5H6.5L3.4 9.5Z" fill="url(#tg)" stroke="#2c1078" stroke-width="1" stroke-linejoin="round"/><path d="M6.5 13H15.5" stroke="#1c0860" stroke-width="1"/><path d="M9 7H11.6V12H9ZM10 8V11H10.7V8Z" fill="#fff" fill-rule="evenodd"/><rect x="13" y="7" width="1.2" height="5" fill="#fff"/></svg></div>
<div class="nm">Output_1</div><div class="tt">Tag table_1</div><div class="dt">Bool</div><div class="ad">%Q1.0</div>
<div class="rt"><span class="cb off"></span></div>
<span class="cb on" style="left:645px"><svg width="13" height="13" viewBox="0 0 13 13" style="left:0;top:0"><path d="M2.3 4.8 L5.6 9.1 L10.5 2.5" fill="none" stroke="#0e489c" stroke-width="2.5" stroke-linejoin="miter"/></svg></span>
<span class="cb on" style="left:695px"><svg width="13" height="13" viewBox="0 0 13 13" style="left:0;top:0"><path d="M2.3 4.8 L5.6 9.1 L10.5 2.5" fill="none" stroke="#0e489c" stroke-width="2.5" stroke-linejoin="miter"/></svg></span>
<span class="cb on" style="left:745px"><svg width="13" height="13" viewBox="0 0 13 13" style="left:0;top:0"><path d="M2.3 4.8 L5.6 9.1 L10.5 2.5" fill="none" stroke="#0e489c" stroke-width="2.5" stroke-linejoin="miter"/></svg></span>
<div class="mv fl"><span class="fi"></span>FALSE</div>
<div class="mv2"></div>
<span class="vs" style="left:38px;background:#bcbcbc"></span>
<span class="vs" style="left:57px"></span>
<span class="vs" style="left:257px"></span>
<span class="vs" style="left:377px"></span>
<span class="vs" style="left:477px"></span>
<span class="vs" style="left:577px"></span>
<span class="vs" style="left:627px"></span>
<span class="vs" style="left:677px"></span>
<span class="vs" style="left:727px"></span>
<span class="vs" style="left:777px"></span>
</div>
<div class="r" style="top:519px">
<div class="n">22</div><div class="ic"><svg width="18" height="18" viewBox="0 0 18 18" style="left:0;top:0"><path d="M1 9.5H4.5" stroke="#100818" stroke-width="1"/><path d="M6.5 5.5H15.5V13.5H6.5L3.4 9.5Z" fill="url(#tg)" stroke="#2c1078" stroke-width="1" stroke-linejoin="round"/><path d="M6.5 13H15.5" stroke="#1c0860" stroke-width="1"/><path d="M9 7H11.6V12H9ZM10 8V11H10.7V8Z" fill="#fff" fill-rule="evenodd"/><rect x="13" y="7" width="1.2" height="5" fill="#fff"/></svg></div>
<div class="nm">Output_10</div><div class="tt">Tag table_1</div><div class="dt">Bool</div><div class="ad">%Q2.1</div>
<div class="rt"><span class="cb off"></span></div>
<span class="cb on" style="left:645px"><svg width="13" height="13" viewBox="0 0 13 13" style="left:0;top:0"><path d="M2.3 4.8 L5.6 9.1 L10.5 2.5" fill="none" stroke="#0e489c" stroke-width="2.5" stroke-linejoin="miter"/></svg></span>
<span class="cb on" style="left:695px"><svg width="13" height="13" viewBox="0 0 13 13" style="left:0;top:0"><path d="M2.3 4.8 L5.6 9.1 L10.5 2.5" fill="none" stroke="#0e489c" stroke-width="2.5" stroke-linejoin="miter"/></svg></span>
<span class="cb on" style="left:745px"><svg width="13" height="13" viewBox="0 0 13 13" style="left:0;top:0"><path d="M2.3 4.8 L5.6 9.1 L10.5 2.5" fill="none" stroke="#0e489c" stroke-width="2.5" stroke-linejoin="miter"/></svg></span>
<div class="mv fl"><span class="fi"></span>FALSE</div>
<div class="mv2"></div>
<span class="vs" style="left:38px;background:#bcbcbc"></span>
<span class="vs" style="left:57px"></span>
<span class="vs" style="left:257px"></span>
<span class="vs" style="left:377px"></span>
<span class="vs" style="left:477px"></span>
<span class="vs" style="left:577px"></span>
<span class="vs" style="left:627px"></span>
<span class="vs" style="left:677px"></span>
<span class="vs" style="left:727px"></span>
<span class="vs" style="left:777px"></span>
</div>
<div class="r" style="top:538px">
<div class="n">23</div><div class="ic"><svg width="18" height="18" viewBox="0 0 18 18" style="left:0;top:0"><path d="M1 9.5H4.5" stroke="#100818" stroke-width="1"/><path d="M6.5 5.5H15.5V13.5H6.5L3.4 9.5Z" fill="url(#tg)" stroke="#2c1078" stroke-width="1" stroke-linejoin="round"/><path d="M6.5 13H15.5" stroke="#1c0860" stroke-width="1"/><path d="M9 7H11.6V12H9ZM10 8V11H10.7V8Z" fill="#fff" fill-rule="evenodd"/><rect x="13" y="7" width="1.2" height="5" fill="#fff"/></svg></div>
<div class="nm">Output_11</div><div class="tt">Tag table_1</div><div class="dt">Bool</div><div class="ad">%Q2.2</div>
<div class="rt"><span class="cb off"></span></div>
<span class="cb on" style="left:645px"><svg width="13" height="13" viewBox="0 0 13 13" style="left:0;top:0"><path d="M2.3 4.8 L5.6 9.1 L10.5 2.5" fill="none" stroke="#0e489c" stroke-width="2.5" stroke-linejoin="miter"/></svg></span>
<span class="cb on" style="left:695px"><svg width="13" height="13" viewBox="0 0 13 13" style="left:0;top:0"><path d="M2.3 4.8 L5.6 9.1 L10.5 2.5" fill="none" stroke="#0e489c" stroke-width="2.5" stroke-linejoin="miter"/></svg></span>
<span class="cb on" style="left:745px"><svg width="13" height="13" viewBox="0 0 13 13" style="left:0;top:0"><path d="M2.3 4.8 L5.6 9.1 L10.5 2.5" fill="none" stroke="#0e489c" stroke-width="2.5" stroke-linejoin="miter"/></svg></span>
<div class="mv fl"><span class="fi"></span>FALSE</div>
<div class="mv2"></div>
<span class="vs" style="left:38px;background:#bcbcbc"></span>
<span class="vs" style="left:57px"></span>
<span class="vs" style="left:257px"></span>
<span class="vs" style="left:377px"></span>
<span class="vs" style="left:477px"></span>
<span class="vs" style="left:577px"></span>
<span class="vs" style="left:627px"></span>
<span class="vs" style="left:677px"></span>
<span class="vs" style="left:727px"></span>
<span class="vs" style="left:777px"></span>
</div>
<div class="r" style="top:557px">
<div class="n">24</div><div class="ic"><svg width="18" height="18" viewBox="0 0 18 18" style="left:0;top:0"><path d="M1 9.5H4.5" stroke="#100818" stroke-width="1"/><path d="M6.5 5.5H15.5V13.5H6.5L3.4 9.5Z" fill="url(#tg)" stroke="#2c1078" stroke-width="1" stroke-linejoin="round"/><path d="M6.5 13H15.5" stroke="#1c0860" stroke-width="1"/><path d="M9 7H11.6V12H9ZM10 8V11H10.7V8Z" fill="#fff" fill-rule="evenodd"/><rect x="13" y="7" width="1.2" height="5" fill="#fff"/></svg></div>
<div class="nm">Output_12</div><div class="tt">Tag table_1</div><div class="dt">Bool</div><div class="ad">%Q2.3</div>
<div class="rt"><span class="cb off"></span></div>
<span class="cb on" style="left:645px"><svg width="13" height="13" viewBox="0 0 13 13" style="left:0;top:0"><path d="M2.3 4.8 L5.6 9.1 L10.5 2.5" fill="none" stroke="#0e489c" stroke-width="2.5" stroke-linejoin="miter"/></svg></span>
<span class="cb on" style="left:695px"><svg width="13" height="13" viewBox="0 0 13 13" style="left:0;top:0"><path d="M2.3 4.8 L5.6 9.1 L10.5 2.5" fill="none" stroke="#0e489c" stroke-width="2.5" stroke-linejoin="miter"/></svg></span>
<span class="cb on" style="left:745px"><svg width="13" height="13" viewBox="0 0 13 13" style="left:0;top:0"><path d="M2.3 4.8 L5.6 9.1 L10.5 2.5" fill="none" stroke="#0e489c" stroke-width="2.5" stroke-linejoin="miter"/></svg></span>
<div class="mv fl"><span class="fi"></span>FALSE</div>
<div class="mv2"></div>
<span class="vs" style="left:38px;background:#bcbcbc"></span>
<span class="vs" style="left:57px"></span>
<span class="vs" style="left:257px"></span>
<span class="vs" style="left:377px"></span>
<span class="vs" style="left:477px"></span>
<span class="vs" style="left:577px"></span>
<span class="vs" style="left:627px"></span>
<span class="vs" style="left:677px"></span>
<span class="vs" style="left:727px"></span>
<span class="vs" style="left:777px"></span>
</div>
<div class="r" style="top:576px">
<div class="n">25</div><div class="ic"><svg width="18" height="18" viewBox="0 0 18 18" style="left:0;top:0"><path d="M1 9.5H4.5" stroke="#100818" stroke-width="1"/><path d="M6.5 5.5H15.5V13.5H6.5L3.4 9.5Z" fill="url(#tg)" stroke="#2c1078" stroke-width="1" stroke-linejoin="round"/><path d="M6.5 13H15.5" stroke="#1c0860" stroke-width="1"/><path d="M9 7H11.6V12H9ZM10 8V11H10.7V8Z" fill="#fff" fill-rule="evenodd"/><rect x="13" y="7" width="1.2" height="5" fill="#fff"/></svg></div>
<div class="nm">Output_13</div><div class="tt">Tag table_1</div><div class="dt">Bool</div><div class="ad">%Q2.4</div>
<div class="rt"><span class="cb off"></span></div>
<span class="cb on" style="left:645px"><svg width="13" height="13" viewBox="0 0 13 13" style="left:0;top:0"><path d="M2.3 4.8 L5.6 9.1 L10.5 2.5" fill="none" stroke="#0e489c" stroke-width="2.5" stroke-linejoin="miter"/></svg></span>
<span class="cb on" style="left:695px"><svg width="13" height="13" viewBox="0 0 13 13" style="left:0;top:0"><path d="M2.3 4.8 L5.6 9.1 L10.5 2.5" fill="none" stroke="#0e489c" stroke-width="2.5" stroke-linejoin="miter"/></svg></span>
<span class="cb on" style="left:745px"><svg width="13" height="13" viewBox="0 0 13 13" style="left:0;top:0"><path d="M2.3 4.8 L5.6 9.1 L10.5 2.5" fill="none" stroke="#0e489c" stroke-width="2.5" stroke-linejoin="miter"/></svg></span>
<div class="mv fl"><span class="fi"></span>FALSE</div>
<div class="mv2"></div>
<span class="vs" style="left:38px;background:#bcbcbc"></span>
<span class="vs" style="left:57px"></span>
<span class="vs" style="left:257px"></span>
<span class="vs" style="left:377px"></span>
<span class="vs" style="left:477px"></span>
<span class="vs" style="left:577px"></span>
<span class="vs" style="left:627px"></span>
<span class="vs" style="left:677px"></span>
<span class="vs" style="left:727px"></span>
<span class="vs" style="left:777px"></span>
</div>
<div class="r" style="top:595px">
<div class="n">26</div><div class="ic"><svg width="18" height="18" viewBox="0 0 18 18" style="left:0;top:0"><path d="M1 9.5H4.5" stroke="#100818" stroke-width="1"/><path d="M6.5 5.5H15.5V13.5H6.5L3.4 9.5Z" fill="url(#tg)" stroke="#2c1078" stroke-width="1" stroke-linejoin="round"/><path d="M6.5 13H15.5" stroke="#1c0860" stroke-width="1"/><path d="M9 7H11.6V12H9ZM10 8V11H10.7V8Z" fill="#fff" fill-rule="evenodd"/><rect x="13" y="7" width="1.2" height="5" fill="#fff"/></svg></div>
<div class="nm">Output_14</div><div class="tt">Tag table_1</div><div class="dt">Bool</div><div class="ad">%Q2.5</div>
<div class="rt"><span class="cb off"></span></div>
<span class="cb on" style="left:645px"><svg width="13" height="13" viewBox="0 0 13 13" style="left:0;top:0"><path d="M2.3 4.8 L5.6 9.1 L10.5 2.5" fill="none" stroke="#0e489c" stroke-width="2.5" stroke-linejoin="miter"/></svg></span>
<span class="cb on" style="left:695px"><svg width="13" height="13" viewBox="0 0 13 13" style="left:0;top:0"><path d="M2.3 4.8 L5.6 9.1 L10.5 2.5" fill="none" stroke="#0e489c" stroke-width="2.5" stroke-linejoin="miter"/></svg></span>
<span class="cb on" style="left:745px"><svg width="13" height="13" viewBox="0 0 13 13" style="left:0;top:0"><path d="M2.3 4.8 L5.6 9.1 L10.5 2.5" fill="none" stroke="#0e489c" stroke-width="2.5" stroke-linejoin="miter"/></svg></span>
<div class="mv fl"><span class="fi"></span>FALSE</div>
<div class="mv2"></div>
<span class="vs" style="left:38px;background:#bcbcbc"></span>
<span class="vs" style="left:57px"></span>
<span class="vs" style="left:257px"></span>
<span class="vs" style="left:377px"></span>
<span class="vs" style="left:477px"></span>
<span class="vs" style="left:577px"></span>
<span class="vs" style="left:627px"></span>
<span class="vs" style="left:677px"></span>
<span class="vs" style="left:727px"></span>
<span class="vs" style="left:777px"></span>
</div>
<div class="r" style="top:614px">
<div class="n">27</div><div class="ic"><svg width="18" height="18" viewBox="0 0 18 18" style="left:0;top:0"><path d="M1 9.5H4.5" stroke="#100818" stroke-width="1"/><path d="M6.5 5.5H15.5V13.5H6.5L3.4 9.5Z" fill="url(#tg)" stroke="#2c1078" stroke-width="1" stroke-linejoin="round"/><path d="M6.5 13H15.5" stroke="#1c0860" stroke-width="1"/><path d="M9 7H11.6V12H9ZM10 8V11H10.7V8Z" fill="#fff" fill-rule="evenodd"/><rect x="13" y="7" width="1.2" height="5" fill="#fff"/></svg></div>
<div class="nm">Output_15</div><div class="tt">Tag table_1</div><div class="dt">Bool</div><div class="ad">%Q2.6</div>
<div class="rt"><span class="cb off"></span></div>
<span class="cb on" style="left:645px"><svg width="13" height="13" viewBox="0 0 13 13" style="left:0;top:0"><path d="M2.3 4.8 L5.6 9.1 L10.5 2.5" fill="none" stroke="#0e489c" stroke-width="2.5" stroke-linejoin="miter"/></svg></span>
<span class="cb on" style="left:695px"><svg width="13" height="13" viewBox="0 0 13 13" style="left:0;top:0"><path d="M2.3 4.8 L5.6 9.1 L10.5 2.5" fill="none" stroke="#0e489c" stroke-width="2.5" stroke-linejoin="miter"/></svg></span>
<span class="cb on" style="left:745px"><svg width="13" height="13" viewBox="0 0 13 13" style="left:0;top:0"><path d="M2.3 4.8 L5.6 9.1 L10.5 2.5" fill="none" stroke="#0e489c" stroke-width="2.5" stroke-linejoin="miter"/></svg></span>
<div class="mv fl"><span class="fi"></span>FALSE</div>
<div class="mv2"></div>
<span class="vs" style="left:38px;background:#bcbcbc"></span>
<span class="vs" style="left:57px"></span>
<span class="vs" style="left:257px"></span>
<span class="vs" style="left:377px"></span>
<span class="vs" style="left:477px"></span>
<span class="vs" style="left:577px"></span>
<span class="vs" style="left:627px"></span>
<span class="vs" style="left:677px"></span>
<span class="vs" style="left:727px"></span>
<span class="vs" style="left:777px"></span>
</div>
<div class="r" style="top:633px">
<div class="n">28</div><div class="ic"><svg width="18" height="18" viewBox="0 0 18 18" style="left:0;top:0"><path d="M1 9.5H4.5" stroke="#100818" stroke-width="1"/><path d="M6.5 5.5H15.5V13.5H6.5L3.4 9.5Z" fill="url(#tg)" stroke="#2c1078" stroke-width="1" stroke-linejoin="round"/><path d="M6.5 13H15.5" stroke="#1c0860" stroke-width="1"/><path d="M9 7H11.6V12H9ZM10 8V11H10.7V8Z" fill="#fff" fill-rule="evenodd"/><rect x="13" y="7" width="1.2" height="5" fill="#fff"/></svg></div>
<div class="nm">Output_16</div><div class="tt">Tag table_1</div><div class="dt">Bool</div><div class="ad">%Q2.7</div>
<div class="rt"><span class="cb off"></span></div>
<span class="cb on" style="left:645px"><svg width="13" height="13" viewBox="0 0 13 13" style="left:0;top:0"><path d="M2.3 4.8 L5.6 9.1 L10.5 2.5" fill="none" stroke="#0e489c" stroke-width="2.5" stroke-linejoin="miter"/></svg></span>
<span class="cb on" style="left:695px"><svg width="13" height="13" viewBox="0 0 13 13" style="left:0;top:0"><path d="M2.3 4.8 L5.6 9.1 L10.5 2.5" fill="none" stroke="#0e489c" stroke-width="2.5" stroke-linejoin="miter"/></svg></span>
<span class="cb on" style="left:745px"><svg width="13" height="13" viewBox="0 0 13 13" style="left:0;top:0"><path d="M2.3 4.8 L5.6 9.1 L10.5 2.5" fill="none" stroke="#0e489c" stroke-width="2.5" stroke-linejoin="miter"/></svg></span>
<div class="mv fl"><span class="fi"></span>FALSE</div>
<div class="mv2"></div>
<span class="vs" style="left:38px;background:#bcbcbc"></span>
<span class="vs" style="left:57px"></span>
<span class="vs" style="left:257px"></span>
<span class="vs" style="left:377px"></span>
<span class="vs" style="left:477px"></span>
<span class="vs" style="left:577px"></span>
<span class="vs" style="left:627px"></span>
<span class="vs" style="left:677px"></span>
<span class="vs" style="left:727px"></span>
<span class="vs" style="left:777px"></span>
</div>
<div class="r" style="top:652px">
<div class="n">29</div><div class="ic"><svg width="18" height="18" viewBox="0 0 18 18" style="left:0;top:0"><path d="M1 9.5H4.5" stroke="#100818" stroke-width="1"/><path d="M6.5 5.5H15.5V13.5H6.5L3.4 9.5Z" fill="url(#tg)" stroke="#2c1078" stroke-width="1" stroke-linejoin="round"/><path d="M6.5 13H15.5" stroke="#1c0860" stroke-width="1"/><path d="M9 7H11.6V12H9ZM10 8V11H10.7V8Z" fill="#fff" fill-rule="evenodd"/><rect x="13" y="7" width="1.2" height="5" fill="#fff"/></svg></div>
<div class="nm">Output_17</div><div class="tt">Tag table_1</div><div class="dt">Bool</div><div class="ad">%Q3.0</div>
<div class="rt"><span class="cb off"></span></div>
<span class="cb on" style="left:645px"><svg width="13" height="13" viewBox="0 0 13 13" style="left:0;top:0"><path d="M2.3 4.8 L5.6 9.1 L10.5 2.5" fill="none" stroke="#0e489c" stroke-width="2.5" stroke-linejoin="miter"/></svg></span>
<span class="cb on" style="left:695px"><svg width="13" height="13" viewBox="0 0 13 13" style="left:0;top:0"><path d="M2.3 4.8 L5.6 9.1 L10.5 2.5" fill="none" stroke="#0e489c" stroke-width="2.5" stroke-linejoin="miter"/></svg></span>
<span class="cb on" style="left:745px"><svg width="13" height="13" viewBox="0 0 13 13" style="left:0;top:0"><path d="M2.3 4.8 L5.6 9.1 L10.5 2.5" fill="none" stroke="#0e489c" stroke-width="2.5" stroke-linejoin="miter"/></svg></span>
<div class="mv fl"><span class="fi"></span>FALSE</div>
<div class="mv2"></div>
<span class="vs" style="left:38px;background:#bcbcbc"></span>
<span class="vs" style="left:57px"></span>
<span class="vs" style="left:257px"></span>
<span class="vs" style="left:377px"></span>
<span class="vs" style="left:477px"></span>
<span class="vs" style="left:577px"></span>
<span class="vs" style="left:627px"></span>
<span class="vs" style="left:677px"></span>
<span class="vs" style="left:727px"></span>
<span class="vs" style="left:777px"></span>
</div>
<div class="r" style="top:671px">
<div class="n">30</div><div class="ic"><svg width="18" height="18" viewBox="0 0 18 18" style="left:0;top:0"><path d="M1 9.5H4.5" stroke="#100818" stroke-width="1"/><path d="M6.5 5.5H15.5V13.5H6.5L3.4 9.5Z" fill="url(#tg)" stroke="#2c1078" stroke-width="1" stroke-linejoin="round"/><path d="M6.5 13H15.5" stroke="#1c0860" stroke-width="1"/><path d="M9 7H11.6V12H9ZM10 8V11H10.7V8Z" fill="#fff" fill-rule="evenodd"/><rect x="13" y="7" width="1.2" height="5" fill="#fff"/></svg></div>
<div class="nm">Output_18</div><div class="tt">Tag table_1</div><div class="dt">Bool</div><div class="ad">%Q3.1</div>
<div class="rt"><span class="cb off"></span></div>
<span class="cb on" style="left:645px"><svg width="13" height="13" viewBox="0 0 13 13" style="left:0;top:0"><path d="M2.3 4.8 L5.6 9.1 L10.5 2.5" fill="none" stroke="#0e489c" stroke-width="2.5" stroke-linejoin="miter"/></svg></span>
<span class="cb on" style="left:695px"><svg width="13" height="13" viewBox="0 0 13 13" style="left:0;top:0"><path d="M2.3 4.8 L5.6 9.1 L10.5 2.5" fill="none" stroke="#0e489c" stroke-width="2.5" stroke-linejoin="miter"/></svg></span>
<span class="cb on" style="left:745px"><svg width="13" height="13" viewBox="0 0 13 13" style="left:0;top:0"><path d="M2.3 4.8 L5.6 9.1 L10.5 2.5" fill="none" stroke="#0e489c" stroke-width="2.5" stroke-linejoin="miter"/></svg></span>
<div class="mv fl"><span class="fi"></span>FALSE</div>
<div class="mv2"></div>
<span class="vs" style="left:38px;background:#bcbcbc"></span>
<span class="vs" style="left:57px"></span>
<span class="vs" style="left:257px"></span>
<span class="vs" style="left:377px"></span>
<span class="vs" style="left:477px"></span>
<span class="vs" style="left:577px"></span>
<span class="vs" style="left:627px"></span>
<span class="vs" style="left:677px"></span>
<span class="vs" style="left:727px"></span>
<span class="vs" style="left:777px"></span>
</div>
<div class="r" style="top:690px">
<div class="n">31</div><div class="ic"><svg width="18" height="18" viewBox="0 0 18 18" style="left:0;top:0"><path d="M1 9.5H4.5" stroke="#100818" stroke-width="1"/><path d="M6.5 5.5H15.5V13.5H6.5L3.4 9.5Z" fill="url(#tg)" stroke="#2c1078" stroke-width="1" stroke-linejoin="round"/><path d="M6.5 13H15.5" stroke="#1c0860" stroke-width="1"/><path d="M9 7H11.6V12H9ZM10 8V11H10.7V8Z" fill="#fff" fill-rule="evenodd"/><rect x="13" y="7" width="1.2" height="5" fill="#fff"/></svg></div>
<div class="nm">Output_19</div><div class="tt">Tag table_1</div><div class="dt">Bool</div><div class="ad">%Q3.2</div>
<div class="rt"><span class="cb off"></span></div>
<span class="cb on" style="left:645px"><svg width="13" height="13" viewBox="0 0 13 13" style="left:0;top:0"><path d="M2.3 4.8 L5.6 9.1 L10.5 2.5" fill="none" stroke="#0e489c" stroke-width="2.5" stroke-linejoin="miter"/></svg></span>
<span class="cb on" style="left:695px"><svg width="13" height="13" viewBox="0 0 13 13" style="left:0;top:0"><path d="M2.3 4.8 L5.6 9.1 L10.5 2.5" fill="none" stroke="#0e489c" stroke-width="2.5" stroke-linejoin="miter"/></svg></span>
<span class="cb on" style="left:745px"><svg width="13" height="13" viewBox="0 0 13 13" style="left:0;top:0"><path d="M2.3 4.8 L5.6 9.1 L10.5 2.5" fill="none" stroke="#0e489c" stroke-width="2.5" stroke-linejoin="miter"/></svg></span>
<div class="mv fl"><span class="fi"></span>FALSE</div>
<div class="mv2"></div>
<span class="vs" style="left:38px;background:#bcbcbc"></span>
<span class="vs" style="left:57px"></span>
<span class="vs" style="left:257px"></span>
<span class="vs" style="left:377px"></span>
<span class="vs" style="left:477px"></span>
<span class="vs" style="left:577px"></span>
<span class="vs" style="left:627px"></span>
<span class="vs" style="left:677px"></span>
<span class="vs" style="left:727px"></span>
<span class="vs" style="left:777px"></span>
</div>
<div class="r" style="top:709px">
<div class="n">32</div><div class="ic"><svg width="18" height="18" viewBox="0 0 18 18" style="left:0;top:0"><path d="M1 9.5H4.5" stroke="#100818" stroke-width="1"/><path d="M6.5 5.5H15.5V13.5H6.5L3.4 9.5Z" fill="url(#tg)" stroke="#2c1078" stroke-width="1" stroke-linejoin="round"/><path d="M6.5 13H15.5" stroke="#1c0860" stroke-width="1"/><path d="M9 7H11.6V12H9ZM10 8V11H10.7V8Z" fill="#fff" fill-rule="evenodd"/><rect x="13" y="7" width="1.2" height="5" fill="#fff"/></svg></div>
<div class="nm">Output_2</div><div class="tt">Tag table_1</div><div class="dt">Bool</div><div class="ad">%Q1.1</div>
<div class="rt"><span class="cb off"></span></div>
<span class="cb on" style="left:645px"><svg width="13" height="13" viewBox="0 0 13 13" style="left:0;top:0"><path d="M2.3 4.8 L5.6 9.1 L10.5 2.5" fill="none" stroke="#0e489c" stroke-width="2.5" stroke-linejoin="miter"/></svg></span>
<span class="cb on" style="left:695px"><svg width="13" height="13" viewBox="0 0 13 13" style="left:0;top:0"><path d="M2.3 4.8 L5.6 9.1 L10.5 2.5" fill="none" stroke="#0e489c" stroke-width="2.5" stroke-linejoin="miter"/></svg></span>
<span class="cb on" style="left:745px"><svg width="13" height="13" viewBox="0 0 13 13" style="left:0;top:0"><path d="M2.3 4.8 L5.6 9.1 L10.5 2.5" fill="none" stroke="#0e489c" stroke-width="2.5" stroke-linejoin="miter"/></svg></span>
<div class="mv fl"><span class="fi"></span>FALSE</div>
<div class="mv2"></div>
<span class="vs" style="left:38px;background:#bcbcbc"></span>
<span class="vs" style="left:57px"></span>
<span class="vs" style="left:257px"></span>
<span class="vs" style="left:377px"></span>
<span class="vs" style="left:477px"></span>
<span class="vs" style="left:577px"></span>
<span class="vs" style="left:627px"></span>
<span class="vs" style="left:677px"></span>
<span class="vs" style="left:727px"></span>
<span class="vs" style="left:777px"></span>
</div>
<div class="r" style="top:728px">
<div class="n">33</div><div class="ic"><svg width="18" height="18" viewBox="0 0 18 18" style="left:0;top:0"><path d="M1 9.5H4.5" stroke="#100818" stroke-width="1"/><path d="M6.5 5.5H15.5V13.5H6.5L3.4 9.5Z" fill="url(#tg)" stroke="#2c1078" stroke-width="1" stroke-linejoin="round"/><path d="M6.5 13H15.5" stroke="#1c0860" stroke-width="1"/><path d="M9 7H11.6V12H9ZM10 8V11H10.7V8Z" fill="#fff" fill-rule="evenodd"/><rect x="13" y="7" width="1.2" height="5" fill="#fff"/></svg></div>
<div class="nm">Output_20</div><div class="tt">Tag table_1</div><div class="dt">Bool</div><div class="ad">%Q3.3</div>
<div class="rt"><span class="cb off"></span></div>
<span class="cb on" style="left:645px"><svg width="13" height="13" viewBox="0 0 13 13" style="left:0;top:0"><path d="M2.3 4.8 L5.6 9.1 L10.5 2.5" fill="none" stroke="#0e489c" stroke-width="2.5" stroke-linejoin="miter"/></svg></span>
<span class="cb on" style="left:695px"><svg width="13" height="13" viewBox="0 0 13 13" style="left:0;top:0"><path d="M2.3 4.8 L5.6 9.1 L10.5 2.5" fill="none" stroke="#0e489c" stroke-width="2.5" stroke-linejoin="miter"/></svg></span>
<span class="cb on" style="left:745px"><svg width="13" height="13" viewBox="0 0 13 13" style="left:0;top:0"><path d="M2.3 4.8 L5.6 9.1 L10.5 2.5" fill="none" stroke="#0e489c" stroke-width="2.5" stroke-linejoin="miter"/></svg></span>
<div class="mv fl"><span class="fi"></span>FALSE</div>
<div class="mv2"></div>
<span class="vs" style="left:38px;background:#bcbcbc"></span>
<span class="vs" style="left:57px"></span>
<span class="vs" style="left:257px"></span>
<span class="vs" style="left:377px"></span>
<span class="vs" style="left:477px"></span>
<span class="vs" style="left:577px"></span>
<span class="vs" style="left:627px"></span>
<span class="vs" style="left:677px"></span>
<span class="vs" style="left:727px"></span>
<span class="vs" style="left:777px"></span>
</div>
<div class="r" style="top:747px">
<div class="n">34</div><div class="ic"><svg width="18" height="18" viewBox="0 0 18 18" style="left:0;top:0"><path d="M1 9.5H4.5" stroke="#100818" stroke-width="1"/><path d="M6.5 5.5H15.5V13.5H6.5L3.4 9.5Z" fill="url(#tg)" stroke="#2c1078" stroke-width="1" stroke-linejoin="round"/><path d="M6.5 13H15.5" stroke="#1c0860" stroke-width="1"/><path d="M9 7H11.6V12H9ZM10 8V11H10.7V8Z" fill="#fff" fill-rule="evenodd"/><rect x="13" y="7" width="1.2" height="5" fill="#fff"/></svg></div>
<div class="nm">Output_21</div><div class="tt">Tag table_1</div><div class="dt">Bool</div><div class="ad">%Q3.4</div>
<div class="rt"><span class="cb off"></span></div>
<span class="cb on" style="left:645px"><svg width="13" height="13" viewBox="0 0 13 13" style="left:0;top:0"><path d="M2.3 4.8 L5.6 9.1 L10.5 2.5" fill="none" stroke="#0e489c" stroke-width="2.5" stroke-linejoin="miter"/></svg></span>
<span class="cb on" style="left:695px"><svg width="13" height="13" viewBox="0 0 13 13" style="left:0;top:0"><path d="M2.3 4.8 L5.6 9.1 L10.5 2.5" fill="none" stroke="#0e489c" stroke-width="2.5" stroke-linejoin="miter"/></svg></span>
<span class="cb on" style="left:745px"><svg width="13" height="13" viewBox="0 0 13 13" style="left:0;top:0"><path d="M2.3 4.8 L5.6 9.1 L10.5 2.5" fill="none" stroke="#0e489c" stroke-width="2.5" stroke-linejoin="miter"/></svg></span>
<div class="mv fl"><span class="fi"></span>FALSE</div>
<div class="mv2"></div>
<span class="vs" style="left:38px;background:#bcbcbc"></span>
<span class="vs" style="left:57px"></span>
<span class="vs" style="left:257px"></span>
<span class="vs" style="left:377px"></span>
<span class="vs" style="left:477px"></span>
<span class="vs" style="left:577px"></span>
<span class="vs" style="left:627px"></span>
<span class="vs" style="left:677px"></span>
<span class="vs" style="left:727px"></span>
<span class="vs" style="left:777px"></span>
</div>
<div class="r" style="top:766px">
<div class="n">35</div><div class="ic"><svg width="18" height="18" viewBox="0 0 18 18" style="left:0;top:0"><path d="M1 9.5H4.5" stroke="#100818" stroke-width="1"/><path d="M6.5 5.5H15.5V13.5H6.5L3.4 9.5Z" fill="url(#tg)" stroke="#2c1078" stroke-width="1" stroke-linejoin="round"/><path d="M6.5 13H15.5" stroke="#1c0860" stroke-width="1"/><path d="M9 7H11.6V12H9ZM10 8V11H10.7V8Z" fill="#fff" fill-rule="evenodd"/><rect x="13" y="7" width="1.2" height="5" fill="#fff"/></svg></div>
<div class="nm">Output_22</div><div class="tt">Tag table_1</div><div class="dt">Bool</div><div class="ad">%Q3.5</div>
<div class="rt"><span class="cb off"></span></div>
<span class="cb on" style="left:645px"><svg width="13" height="13" viewBox="0 0 13 13" style="left:0;top:0"><path d="M2.3 4.8 L5.6 9.1 L10.5 2.5" fill="none" stroke="#0e489c" stroke-width="2.5" stroke-linejoin="miter"/></svg></span>
<span class="cb on" style="left:695px"><svg width="13" height="13" viewBox="0 0 13 13" style="left:0;top:0"><path d="M2.3 4.8 L5.6 9.1 L10.5 2.5" fill="none" stroke="#0e489c" stroke-width="2.5" stroke-linejoin="miter"/></svg></span>
<span class="cb on" style="left:745px"><svg width="13" height="13" viewBox="0 0 13 13" style="left:0;top:0"><path d="M2.3 4.8 L5.6 9.1 L10.5 2.5" fill="none" stroke="#0e489c" stroke-width="2.5" stroke-linejoin="miter"/></svg></span>
<div class="mv fl"><span class="fi"></span>FALSE</div>
<div class="mv2"></div>
<span class="vs" style="left:38px;background:#bcbcbc"></span>
<span class="vs" style="left:57px"></span>
<span class="vs" style="left:257px"></span>
<span class="vs" style="left:377px"></span>
<span class="vs" style="left:477px"></span>
<span class="vs" style="left:577px"></span>
<span class="vs" style="left:627px"></span>
<span class="vs" style="left:677px"></span>
<span class="vs" style="left:727px"></span>
<span class="vs" style="left:777px"></span>
</div>
<div class="r" style="top:785px">
<div class="n">36</div><div class="ic"><svg width="18" height="18" viewBox="0 0 18 18" style="left:0;top:0"><path d="M1 9.5H4.5" stroke="#100818" stroke-width="1"/><path d="M6.5 5.5H15.5V13.5H6.5L3.4 9.5Z" fill="url(#tg)" stroke="#2c1078" stroke-width="1" stroke-linejoin="round"/><path d="M6.5 13H15.5" stroke="#1c0860" stroke-width="1"/><path d="M9 7H11.6V12H9ZM10 8V11H10.7V8Z" fill="#fff" fill-rule="evenodd"/><rect x="13" y="7" width="1.2" height="5" fill="#fff"/></svg></div>
<div class="nm">Output_23</div><div class="tt">Tag table_1</div><div class="dt">Bool</div><div class="ad">%Q3.6</div>
<div class="rt"><span class="cb off"></span></div>
<span class="cb on" style="left:645px"><svg width="13" height="13" viewBox="0 0 13 13" style="left:0;top:0"><path d="M2.3 4.8 L5.6 9.1 L10.5 2.5" fill="none" stroke="#0e489c" stroke-width="2.5" stroke-linejoin="miter"/></svg></span>
<span class="cb on" style="left:695px"><svg width="13" height="13" viewBox="0 0 13 13" style="left:0;top:0"><path d="M2.3 4.8 L5.6 9.1 L10.5 2.5" fill="none" stroke="#0e489c" stroke-width="2.5" stroke-linejoin="miter"/></svg></span>
<span class="cb on" style="left:745px"><svg width="13" height="13" viewBox="0 0 13 13" style="left:0;top:0"><path d="M2.3 4.8 L5.6 9.1 L10.5 2.5" fill="none" stroke="#0e489c" stroke-width="2.5" stroke-linejoin="miter"/></svg></span>
<div class="mv fl"><span class="fi"></span>FALSE</div>
<div class="mv2"></div>
<span class="vs" style="left:38px;background:#bcbcbc"></span>
<span class="vs" style="left:57px"></span>
<span class="vs" style="left:257px"></span>
<span class="vs" style="left:377px"></span>
<span class="vs" style="left:477px"></span>
<span class="vs" style="left:577px"></span>
<span class="vs" style="left:627px"></span>
<span class="vs" style="left:677px"></span>
<span class="vs" style="left:727px"></span>
<span class="vs" style="left:777px"></span>
</div>
<div class="r" style="top:804px">
<div class="n">37</div><div class="ic"><svg width="18" height="18" viewBox="0 0 18 18" style="left:0;top:0"><path d="M1 9.5H4.5" stroke="#100818" stroke-width="1"/><path d="M6.5 5.5H15.5V13.5H6.5L3.4 9.5Z" fill="url(#tg)" stroke="#2c1078" stroke-width="1" stroke-linejoin="round"/><path d="M6.5 13H15.5" stroke="#1c0860" stroke-width="1"/><path d="M9 7H11.6V12H9ZM10 8V11H10.7V8Z" fill="#fff" fill-rule="evenodd"/><rect x="13" y="7" width="1.2" height="5" fill="#fff"/></svg></div>
<div class="nm">Output_24</div><div class="tt">Tag table_1</div><div class="dt">Bool</div><div class="ad">%Q3.7</div>
<div class="rt"><span class="cb off"></span></div>
<span class="cb on" style="left:645px"><svg width="13" height="13" viewBox="0 0 13 13" style="left:0;top:0"><path d="M2.3 4.8 L5.6 9.1 L10.5 2.5" fill="none" stroke="#0e489c" stroke-width="2.5" stroke-linejoin="miter"/></svg></span>
<span class="cb on" style="left:695px"><svg width="13" height="13" viewBox="0 0 13 13" style="left:0;top:0"><path d="M2.3 4.8 L5.6 9.1 L10.5 2.5" fill="none" stroke="#0e489c" stroke-width="2.5" stroke-linejoin="miter"/></svg></span>
<span class="cb on" style="left:745px"><svg width="13" height="13" viewBox="0 0 13 13" style="left:0;top:0"><path d="M2.3 4.8 L5.6 9.1 L10.5 2.5" fill="none" stroke="#0e489c" stroke-width="2.5" stroke-linejoin="miter"/></svg></span>
<div class="mv fl"><span class="fi"></span>FALSE</div>
<div class="mv2"></div>
<span class="vs" style="left:38px;background:#bcbcbc"></span>
<span class="vs" style="left:57px"></span>
<span class="vs" style="left:257px"></span>
<span class="vs" style="left:377px"></span>
<span class="vs" style="left:477px"></span>
<span class="vs" style="left:577px"></span>
<span class="vs" style="left:627px"></span>
<span class="vs" style="left:677px"></span>
<span class="vs" style="left:727px"></span>
<span class="vs" style="left:777px"></span>
</div>
<div class="r" style="top:823px">
<div class="n">38</div><div class="ic"><svg width="18" height="18" viewBox="0 0 18 18" style="left:0;top:0"><path d="M1 9.5H4.5" stroke="#100818" stroke-width="1"/><path d="M6.5 5.5H15.5V13.5H6.5L3.4 9.5Z" fill="url(#tg)" stroke="#2c1078" stroke-width="1" stroke-linejoin="round"/><path d="M6.5 13H15.5" stroke="#1c0860" stroke-width="1"/><path d="M9 7H11.6V12H9ZM10 8V11H10.7V8Z" fill="#fff" fill-rule="evenodd"/><rect x="13" y="7" width="1.2" height="5" fill="#fff"/></svg></div>
<div class="nm">Output_25</div><div class="tt">Tag table_1</div><div class="dt">Bool</div><div class="ad">%Q4.0</div>
<div class="rt"><span class="cb off"></span></div>
<span class="cb on" style="left:645px"><svg width="13" height="13" viewBox="0 0 13 13" style="left:0;top:0"><path d="M2.3 4.8 L5.6 9.1 L10.5 2.5" fill="none" stroke="#0e489c" stroke-width="2.5" stroke-linejoin="miter"/></svg></span>
<span class="cb on" style="left:695px"><svg width="13" height="13" viewBox="0 0 13 13" style="left:0;top:0"><path d="M2.3 4.8 L5.6 9.1 L10.5 2.5" fill="none" stroke="#0e489c" stroke-width="2.5" stroke-linejoin="miter"/></svg></span>
<span class="cb on" style="left:745px"><svg width="13" height="13" viewBox="0 0 13 13" style="left:0;top:0"><path d="M2.3 4.8 L5.6 9.1 L10.5 2.5" fill="none" stroke="#0e489c" stroke-width="2.5" stroke-linejoin="miter"/></svg></span>
<div class="mv fl"><span class="fi"></span>FALSE</div>
<div class="mv2"></div>
<span class="vs" style="left:38px;background:#bcbcbc"></span>
<span class="vs" style="left:57px"></span>
<span class="vs" style="left:257px"></span>
<span class="vs" style="left:377px"></span>
<span class="vs" style="left:477px"></span>
<span class="vs" style="left:577px"></span>
<span class="vs" style="left:627px"></span>
<span class="vs" style="left:677px"></span>
<span class="vs" style="left:727px"></span>
<span class="vs" style="left:777px"></span>
</div>
<div class="r" style="top:842px">
<div class="n">39</div><div class="ic"><svg width="18" height="18" viewBox="0 0 18 18" style="left:0;top:0"><path d="M1 9.5H4.5" stroke="#100818" stroke-width="1"/><path d="M6.5 5.5H15.5V13.5H6.5L3.4 9.5Z" fill="url(#tg)" stroke="#2c1078" stroke-width="1" stroke-linejoin="round"/><path d="M6.5 13H15.5" stroke="#1c0860" stroke-width="1"/><path d="M9 7H11.6V12H9ZM10 8V11H10.7V8Z" fill="#fff" fill-rule="evenodd"/><rect x="13" y="7" width="1.2" height="5" fill="#fff"/></svg></div>
<div class="nm">Output_26</div><div class="tt">Tag table_1</div><div class="dt">Bool</div><div class="ad">%Q4.1</div>
<div class="rt"><span class="cb off"></span></div>
<span class="cb on" style="left:645px"><svg width="13" height="13" viewBox="0 0 13 13" style="left:0;top:0"><path d="M2.3 4.8 L5.6 9.1 L10.5 2.5" fill="none" stroke="#0e489c" stroke-width="2.5" stroke-linejoin="miter"/></svg></span>
<span class="cb on" style="left:695px"><svg width="13" height="13" viewBox="0 0 13 13" style="left:0;top:0"><path d="M2.3 4.8 L5.6 9.1 L10.5 2.5" fill="none" stroke="#0e489c" stroke-width="2.5" stroke-linejoin="miter"/></svg></span>
<span class="cb on" style="left:745px"><svg width="13" height="13" viewBox="0 0 13 13" style="left:0;top:0"><path d="M2.3 4.8 L5.6 9.1 L10.5 2.5" fill="none" stroke="#0e489c" stroke-width="2.5" stroke-linejoin="miter"/></svg></span>
<div class="mv fl"><span class="fi"></span>FALSE</div>
<div class="mv2"></div>
<span class="vs" style="left:38px;background:#bcbcbc"></span>
<span class="vs" style="left:57px"></span>
<span class="vs" style="left:257px"></span>
<span class="vs" style="left:377px"></span>
<span class="vs" style="left:477px"></span>
<span class="vs" style="left:577px"></span>
<span class="vs" style="left:627px"></span>
<span class="vs" style="left:677px"></span>
<span class="vs" style="left:727px"></span>
<span class="vs" style="left:777px"></span>
</div>
<div class="r" style="top:861px">
<div class="n">40</div><div class="ic"><svg width="18" height="18" viewBox="0 0 18 18" style="left:0;top:0"><path d="M1 9.5H4.5" stroke="#100818" stroke-width="1"/><path d="M6.5 5.5H15.5V13.5H6.5L3.4 9.5Z" fill="url(#tg)" stroke="#2c1078" stroke-width="1" stroke-linejoin="round"/><path d="M6.5 13H15.5" stroke="#1c0860" stroke-width="1"/><path d="M9 7H11.6V12H9ZM10 8V11H10.7V8Z" fill="#fff" fill-rule="evenodd"/><rect x="13" y="7" width="1.2" height="5" fill="#fff"/></svg></div>
<div class="nm">Output_27</div><div class="tt">Tag table_1</div><div class="dt">Bool</div><div class="ad">%Q4.2</div>
<div class="rt"><span class="cb off"></span></div>
<span class="cb on" style="left:645px"><svg width="13" height="13" viewBox="0 0 13 13" style="left:0;top:0"><path d="M2.3 4.8 L5.6 9.1 L10.5 2.5" fill="none" stroke="#0e489c" stroke-width="2.5" stroke-linejoin="miter"/></svg></span>
<span class="cb on" style="left:695px"><svg width="13" height="13" viewBox="0 0 13 13" style="left:0;top:0"><path d="M2.3 4.8 L5.6 9.1 L10.5 2.5" fill="none" stroke="#0e489c" stroke-width="2.5" stroke-linejoin="miter"/></svg></span>
<span class="cb on" style="left:745px"><svg width="13" height="13" viewBox="0 0 13 13" style="left:0;top:0"><path d="M2.3 4.8 L5.6 9.1 L10.5 2.5" fill="none" stroke="#0e489c" stroke-width="2.5" stroke-linejoin="miter"/></svg></span>
<div class="mv fl"><span class="fi"></span>FALSE</div>
<div class="mv2"></div>
<span class="vs" style="left:38px;background:#bcbcbc"></span>
<span class="vs" style="left:57px"></span>
<span class="vs" style="left:257px"></span>
<span class="vs" style="left:377px"></span>
<span class="vs" style="left:477px"></span>
<span class="vs" style="left:577px"></span>
<span class="vs" style="left:627px"></span>
<span class="vs" style="left:677px"></span>
<span class="vs" style="left:727px"></span>
<span class="vs" style="left:777px"></span>
</div>
<div class="r" style="top:880px">
<div class="n">41</div><div class="ic"><svg width="18" height="18" viewBox="0 0 18 18" style="left:0;top:0"><path d="M1 9.5H4.5" stroke="#100818" stroke-width="1"/><path d="M6.5 5.5H15.5V13.5H6.5L3.4 9.5Z" fill="url(#tg)" stroke="#2c1078" stroke-width="1" stroke-linejoin="round"/><path d="M6.5 13H15.5" stroke="#1c0860" stroke-width="1"/><path d="M9 7H11.6V12H9ZM10 8V11H10.7V8Z" fill="#fff" fill-rule="evenodd"/><rect x="13" y="7" width="1.2" height="5" fill="#fff"/></svg></div>
<div class="nm">Output_28</div><div class="tt">Tag table_1</div><div class="dt">Bool</div><div class="ad">%Q4.3</div>
<div class="rt"><span class="cb off"></span></div>
<span class="cb on" style="left:645px"><svg width="13" height="13" viewBox="0 0 13 13" style="left:0;top:0"><path d="M2.3 4.8 L5.6 9.1 L10.5 2.5" fill="none" stroke="#0e489c" stroke-width="2.5" stroke-linejoin="miter"/></svg></span>
<span class="cb on" style="left:695px"><svg width="13" height="13" viewBox="0 0 13 13" style="left:0;top:0"><path d="M2.3 4.8 L5.6 9.1 L10.5 2.5" fill="none" stroke="#0e489c" stroke-width="2.5" stroke-linejoin="miter"/></svg></span>
<span class="cb on" style="left:745px"><svg width="13" height="13" viewBox="0 0 13 13" style="left:0;top:0"><path d="M2.3 4.8 L5.6 9.1 L10.5 2.5" fill="none" stroke="#0e489c" stroke-width="2.5" stroke-linejoin="miter"/></svg></span>
<div class="mv fl"><span class="fi"></span>FALSE</div>
<div class="mv2"></div>
<span class="vs" style="left:38px;background:#bcbcbc"></span>
<span class="vs" style="left:57px"></span>
<span class="vs" style="left:257px"></span>
<span class="vs" style="left:377px"></span>
<span class="vs" style="left:477px"></span>
<span class="vs" style="left:577px"></span>
<span class="vs" style="left:627px"></span>
<span class="vs" style="left:677px"></span>
<span class="vs" style="left:727px"></span>
<span class="vs" style="left:777px"></span>
</div>
<div class="r" style="top:899px">
<div class="n">42</div><div class="ic"><svg width="18" height="18" viewBox="0 0 18 18" style="left:0;top:0"><path d="M1 9.5H4.5" stroke="#100818" stroke-width="1"/><path d="M6.5 5.5H15.5V13.5H6.5L3.4 9.5Z" fill="url(#tg)" stroke="#2c1078" stroke-width="1" stroke-linejoin="round"/><path d="M6.5 13H15.5" stroke="#1c0860" stroke-width="1"/><path d="M9 7H11.6V12H9ZM10 8V11H10.7V8Z" fill="#fff" fill-rule="evenodd"/><rect x="13" y="7" width="1.2" height="5" fill="#fff"/></svg></div>
<div class="nm">Output_29</div><div class="tt">Tag table_1</div><div class="dt">Bool</div><div class="ad">%Q4.4</div>
<div class="rt"><span class="cb off"></span></div>
<span class="cb on" style="left:645px"><svg width="13" height="13" viewBox="0 0 13 13" style="left:0;top:0"><path d="M2.3 4.8 L5.6 9.1 L10.5 2.5" fill="none" stroke="#0e489c" stroke-width="2.5" stroke-linejoin="miter"/></svg></span>
<span class="cb on" style="left:695px"><svg width="13" height="13" viewBox="0 0 13 13" style="left:0;top:0"><path d="M2.3 4.8 L5.6 9.1 L10.5 2.5" fill="none" stroke="#0e489c" stroke-width="2.5" stroke-linejoin="miter"/></svg></span>
<span class="cb on" style="left:745px"><svg width="13" height="13" viewBox="0 0 13 13" style="left:0;top:0"><path d="M2.3 4.8 L5.6 9.1 L10.5 2.5" fill="none" stroke="#0e489c" stroke-width="2.5" stroke-linejoin="miter"/></svg></span>
<div class="mv fl"><span class="fi"></span>FALSE</div>
<div class="mv2"></div>
<span class="vs" style="left:38px;background:#bcbcbc"></span>
<span class="vs" style="left:57px"></span>
<span class="vs" style="left:257px"></span>
<span class="vs" style="left:377px"></span>
<span class="vs" style="left:477px"></span>
<span class="vs" style="left:577px"></span>
<span class="vs" style="left:627px"></span>
<span class="vs" style="left:677px"></span>
<span class="vs" style="left:727px"></span>
<span class="vs" style="left:777px"></span>
</div>
<div class="r" style="top:918px">
<div class="n">43</div><div class="ic"><svg width="18" height="18" viewBox="0 0 18 18" style="left:0;top:0"><path d="M1 9.5H4.5" stroke="#100818" stroke-width="1"/><path d="M6.5 5.5H15.5V13.5H6.5L3.4 9.5Z" fill="url(#tg)" stroke="#2c1078" stroke-width="1" stroke-linejoin="round"/><path d="M6.5 13H15.5" stroke="#1c0860" stroke-width="1"/><path d="M9 7H11.6V12H9ZM10 8V11H10.7V8Z" fill="#fff" fill-rule="evenodd"/><rect x="13" y="7" width="1.2" height="5" fill="#fff"/></svg></div>
<div class="nm">Output_3</div><div class="tt">Tag table_1</div><div class="dt">Bool</div><div class="ad">%Q1.2</div>
<div class="rt"><span class="cb off"></span></div>
<span class="cb on" style="left:645px"><svg width="13" height="13" viewBox="0 0 13 13" style="left:0;top:0"><path d="M2.3 4.8 L5.6 9.1 L10.5 2.5" fill="none" stroke="#0e489c" stroke-width="2.5" stroke-linejoin="miter"/></svg></span>
<span class="cb on" style="left:695px"><svg width="13" height="13" viewBox="0 0 13 13" style="left:0;top:0"><path d="M2.3 4.8 L5.6 9.1 L10.5 2.5" fill="none" stroke="#0e489c" stroke-width="2.5" stroke-linejoin="miter"/></svg></span>
<span class="cb on" style="left:745px"><svg width="13" height="13" viewBox="0 0 13 13" style="left:0;top:0"><path d="M2.3 4.8 L5.6 9.1 L10.5 2.5" fill="none" stroke="#0e489c" stroke-width="2.5" stroke-linejoin="miter"/></svg></span>
<div class="mv fl"><span class="fi"></span>FALSE</div>
<div class="mv2"></div>
<span class="vs" style="left:38px;background:#bcbcbc"></span>
<span class="vs" style="left:57px"></span>
<span class="vs" style="left:257px"></span>
<span class="vs" style="left:377px"></span>
<span class="vs" style="left:477px"></span>
<span class="vs" style="left:577px"></span>
<span class="vs" style="left:627px"></span>
<span class="vs" style="left:677px"></span>
<span class="vs" style="left:727px"></span>
<span class="vs" style="left:777px"></span>
</div>
<span class="btn" style="left:359px;top:140px;width:17px"><svg width="8" height="4" viewBox="0 0 8 4" shape-rendering="crispEdges" style="left:4px;top:6px"><path d="M0 0H8V1H7V2H6V3H5V4H3V3H2V2H1V1H0Z" fill="#10007c"/></svg></span>
<span class="btn" style="left:559px;top:140px;width:18px;border-color:#787878"><svg width="8" height="4" viewBox="0 0 8 4" shape-rendering="crispEdges" style="left:4px;top:6px"><path d="M0 0H8V1H7V2H6V3H5V4H3V3H2V2H1V1H0Z" fill="#000"/></svg></span>
<span class="abs" style="left:377px;top:139px;width:101px;height:20px;border:1px solid #4a6eb0;background:#fff"></span>
<span class="abs" style="left:382px;top:141px;line-height:17px">Word</span>
<span class="abs" style="left:460px;top:140px;width:17px;height:18px;border:1px solid #9a9a9a;border-top-color:#8a8a8a;border-right-color:#8c8cb0;background:#f2f2f2"><svg width="10" height="13" viewBox="0 0 10 13" shape-rendering="crispEdges" style="left:2px;top:2px"><rect x=".5" y=".5" width="9" height="12" fill="#fff" stroke="#9494d4"/><path d="M1 12.5H10" stroke="#6868b0"/><path d="M2 3h1v1h-1zM2 5h1v1h-1zM2 7h1v1h-1zM2 9h1v1h-1zM4 3h4v1h-4zM4 5h4v1h-4zM4 7h4v1h-4zM4 9h4v1h-4z" fill="#0c0c3c"/></svg></span>
<span class="abs" style="left:474px;top:155px;width:5px;height:5px;background:#3a6ad0;border-left:1px solid #fff;border-top:1px solid #fff"></span>
<div id="lborder" class="abs"></div>
</div></body></html>
